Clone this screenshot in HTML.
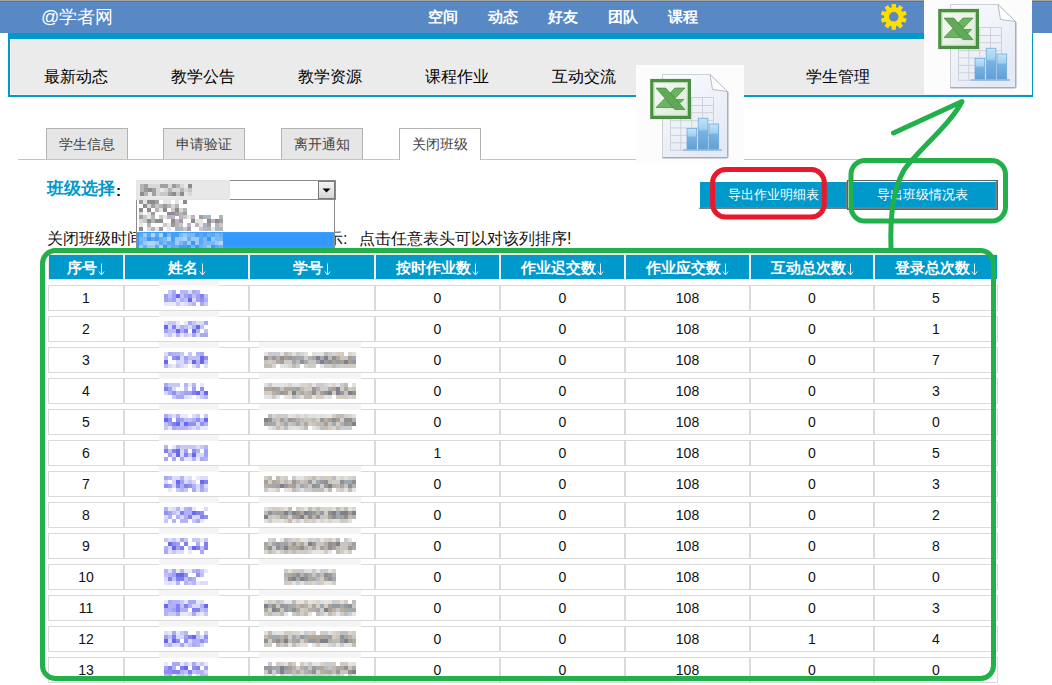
<!DOCTYPE html>
<html><head><meta charset="utf-8"><title>学生管理</title>
<style>
html,body{margin:0;padding:0;width:1052px;height:685px;overflow:hidden;background:#fff;font-family:'Liberation Sans',sans-serif;}
.a{position:absolute;white-space:nowrap}
</style></head><body>

<div class="a" style="left:0;top:0;width:1052px;height:1px;background:#a3a3a3"></div>
<div class="a" style="left:0;top:1px;width:1052px;height:1px;background:#707070"></div>
<div class="a" style="left:0;top:2px;width:1052px;height:31px;background:#5889c5"></div>
<div class="a" style="left:41px;top:6px;font-size:18px;line-height:22px;color:#fff">@学者网</div>
<div class="a" style="left:428px;top:7px;font-size:15px;line-height:20px;color:#fff;font-weight:bold">空间</div>
<div class="a" style="left:488px;top:7px;font-size:15px;line-height:20px;color:#fff;font-weight:bold">动态</div>
<div class="a" style="left:548px;top:7px;font-size:15px;line-height:20px;color:#fff;font-weight:bold">好友</div>
<div class="a" style="left:608px;top:7px;font-size:15px;line-height:20px;color:#fff;font-weight:bold">团队</div>
<div class="a" style="left:668px;top:7px;font-size:15px;line-height:20px;color:#fff;font-weight:bold">课程</div>
<svg style="position:absolute;left:0;top:0" width="1052" height="40"><path d="M891.66 7.13 L891.64 3.88 L895.96 3.88 L895.94 7.13 L896.74 7.76 L897.75 7.72 L899.65 5.08 L903.14 7.62 L901.21 10.24 L901.49 11.22 L902.33 11.78 L905.42 10.75 L906.76 14.86 L903.65 15.85 L903.30 16.80 L903.65 17.75 L906.76 18.74 L905.42 22.85 L902.33 21.82 L901.49 22.38 L901.21 23.36 L903.14 25.98 L899.65 28.52 L897.75 25.88 L896.74 25.84 L895.94 26.47 L895.96 29.72 L891.64 29.72 L891.66 26.47 L890.86 25.84 L889.85 25.88 L887.95 28.52 L884.46 25.98 L886.39 23.36 L886.11 22.38 L885.27 21.82 L882.18 22.85 L880.84 18.74 L883.95 17.75 L884.30 16.80 L883.95 15.85 L880.84 14.86 L882.18 10.75 L885.27 11.78 L886.11 11.22 L886.39 10.24 L884.46 7.62 L887.95 5.08 L889.85 7.72 L890.86 7.76 Z M898.60 16.8 A4.8 4.8 0 1 0 889.00 16.8 A4.8 4.8 0 1 0 898.60 16.8 Z" fill="#ffdd00" fill-rule="evenodd"/></svg>
<div class="a" style="left:8px;top:33px;width:1022px;height:56px;border-style:solid;border-color:#0099cc;border-width:6px 1px 2px 2px;background:#ebebeb"><div style="position:absolute;left:0;top:0;right:0;bottom:0;border-left:1px solid #fbf3f0;border-bottom:1px solid #fbf3f0"></div></div>
<div class="a" style="left:44px;top:67px;font-size:16px;line-height:20px;color:#000">最新动态</div>
<div class="a" style="left:171px;top:67px;font-size:16px;line-height:20px;color:#000">教学公告</div>
<div class="a" style="left:298px;top:67px;font-size:16px;line-height:20px;color:#000">教学资源</div>
<div class="a" style="left:425px;top:67px;font-size:16px;line-height:20px;color:#000">课程作业</div>
<div class="a" style="left:552px;top:67px;font-size:16px;line-height:20px;color:#000">互动交流</div>
<div class="a" style="left:806px;top:67px;font-size:16px;line-height:20px;color:#000">学生管理</div>
<div class="a" style="left:18px;top:159px;width:981px;height:1px;background:#c4c4c4"></div>
<div class="a" style="left:46px;top:128px;width:80px;height:30px;border:1px solid #b3b3b3;border-bottom:none;background:#e6e6e6;font-size:14px;line-height:30px;text-align:center;color:#444"><span style="position:relative;left:0px">学生信息</span></div>
<div class="a" style="left:163px;top:128px;width:80px;height:30px;border:1px solid #b3b3b3;border-bottom:none;background:#e6e6e6;font-size:14px;line-height:30px;text-align:center;color:#444"><span style="position:relative;left:0px">申请验证</span></div>
<div class="a" style="left:281px;top:128px;width:80px;height:30px;border:1px solid #b3b3b3;border-bottom:none;background:#e6e6e6;font-size:14px;line-height:30px;text-align:center;color:#444"><span style="position:relative;left:0px">离开通知</span></div>
<div class="a" style="left:399px;top:128px;width:80px;height:31px;border:1px solid #b3b3b3;border-bottom:none;background:#fff;font-size:14px;line-height:30px;text-align:center;color:#444"><span style="position:relative;left:0px">关闭班级</span></div>
<div class="a" style="left:47px;top:179px;font-size:17px;line-height:20px;color:#0099cc;font-weight:bold">班级选择<span style="color:#000;font-weight:bold;font-size:15px;margin-left:1px;position:relative;top:2px">:</span></div>
<div class="a" style="left:47px;top:229px;font-size:16px;line-height:20px;color:#111">关闭班级时间</div>
<div class="a" style="left:311px;top:229px;font-size:16px;line-height:20px;color:#111">提示<span style="display:inline-block;width:16px">:</span>点击任意表头可以对该列排序!</div>
<div class="a" style="left:136px;top:180px;width:198px;height:18px;border:1px solid #8a8a8a;background:#fff"></div>
<div class="a" style="left:136px;top:180px;width:94px;height:20px;background:#e4e4e4"></div>
<div class="a" style="left:137px;top:181px;width:92px;height:18px;background:#e8e8e8"></div>
<div class="a" style="left:318px;top:181px;width:15px;height:16px;border:1px solid #7a7a7a;background:linear-gradient(#f4f4f4,#d6d6d6)"></div>
<svg class="a" style="left:318px;top:181px" width="17" height="18"><path d="M4.5 7.5 H12.5 L8.5 11.5 Z" fill="#000"/></svg>
<div class="a" style="left:136px;top:200px;width:197px;height:47px;border:1px solid #8a8a8a;border-top:none;background:#fff"></div>
<div class="a" style="left:137px;top:232px;width:197px;height:15px;background:#3399ff;outline:1px dotted #d08040;outline-offset:-1px"></div>
<svg class="a" style="left:0;top:0" width="1052" height="250"><rect x="140" y="184" width="4" height="4" fill="#b5b5b5"/><rect x="144" y="184" width="4" height="4" fill="#a0a0a0"/><rect x="148" y="184" width="4" height="4" fill="#d8d8d8"/><rect x="152" y="184" width="4" height="4" fill="#d8d8d8"/><rect x="156" y="184" width="4" height="4" fill="#d8d8d8"/><rect x="160" y="184" width="4" height="4" fill="#a0a0a0"/><rect x="164" y="184" width="4" height="4" fill="#a0a0a0"/><rect x="168" y="184" width="4" height="4" fill="#d8d8d8"/><rect x="172" y="184" width="4" height="4" fill="#9a9a9a"/><rect x="176" y="184" width="4" height="4" fill="#b5b5b5"/><rect x="180" y="184" width="4" height="4" fill="#d8d8d8"/><rect x="188" y="184" width="4" height="4" fill="#8c8c8c"/><rect x="140" y="188" width="4" height="4" fill="#b5b5b5"/><rect x="144" y="188" width="4" height="4" fill="#9a9a9a"/><rect x="148" y="188" width="4" height="4" fill="#8c8c8c"/><rect x="152" y="188" width="4" height="4" fill="#a0a0a0"/><rect x="156" y="188" width="4" height="4" fill="#d8d8d8"/><rect x="164" y="188" width="4" height="4" fill="#d8d8d8"/><rect x="168" y="188" width="4" height="4" fill="#b5b5b5"/><rect x="172" y="188" width="4" height="4" fill="#d8d8d8"/><rect x="176" y="188" width="4" height="4" fill="#d8d8d8"/><rect x="180" y="188" width="4" height="4" fill="#b5b5b5"/><rect x="184" y="188" width="4" height="4" fill="#d8d8d8"/><rect x="188" y="188" width="4" height="4" fill="#c8c8c8"/><rect x="140" y="192" width="4" height="4" fill="#8c8c8c"/><rect x="144" y="192" width="4" height="4" fill="#b5b5b5"/><rect x="148" y="192" width="4" height="4" fill="#e6e6e6"/><rect x="152" y="192" width="4" height="4" fill="#a0a0a0"/><rect x="156" y="192" width="4" height="4" fill="#d8d8d8"/><rect x="160" y="192" width="4" height="4" fill="#c8c8c8"/><rect x="164" y="192" width="4" height="4" fill="#c8c8c8"/><rect x="168" y="192" width="4" height="4" fill="#a0a0a0"/><rect x="172" y="192" width="4" height="4" fill="#8c8c8c"/><rect x="176" y="192" width="4" height="4" fill="#c8c8c8"/><rect x="180" y="192" width="4" height="4" fill="#8c8c8c"/><rect x="184" y="192" width="4" height="4" fill="#e6e6e6"/><rect x="188" y="192" width="4" height="4" fill="#d8d8d8"/><rect x="139" y="200" width="4" height="4" fill="#9a9a9a"/><rect x="143" y="200" width="4" height="4" fill="#e6e6e6"/><rect x="147" y="200" width="4" height="4" fill="#8c8c8c"/><rect x="151" y="200" width="4" height="4" fill="#8c8c8c"/><rect x="155" y="200" width="4" height="4" fill="#a0a0a0"/><rect x="163" y="200" width="4" height="4" fill="#e6e6e6"/><rect x="167" y="200" width="4" height="4" fill="#e6e6e6"/><rect x="175" y="200" width="4" height="4" fill="#e6e6e6"/><rect x="183" y="200" width="4" height="4" fill="#8c8c8c"/><rect x="143" y="204" width="4" height="4" fill="#8c8c8c"/><rect x="147" y="204" width="4" height="4" fill="#d8d8d8"/><rect x="151" y="204" width="4" height="4" fill="#a0a0a0"/><rect x="155" y="204" width="4" height="4" fill="#c8c8c8"/><rect x="159" y="204" width="4" height="4" fill="#b5b5b5"/><rect x="163" y="204" width="4" height="4" fill="#9a9a9a"/><rect x="167" y="204" width="4" height="4" fill="#b5b5b5"/><rect x="171" y="204" width="4" height="4" fill="#d8d8d8"/><rect x="175" y="204" width="4" height="4" fill="#b5b5b5"/><rect x="139" y="208" width="4" height="4" fill="#8c8c8c"/><rect x="147" y="208" width="4" height="4" fill="#8c8c8c"/><rect x="155" y="208" width="4" height="4" fill="#b5b5b5"/><rect x="159" y="208" width="4" height="4" fill="#e6e6e6"/><rect x="163" y="208" width="4" height="4" fill="#8c8c8c"/><rect x="171" y="208" width="4" height="4" fill="#c8c8c8"/><rect x="175" y="208" width="4" height="4" fill="#8c8c8c"/><rect x="179" y="208" width="4" height="4" fill="#d8d8d8"/><rect x="183" y="208" width="4" height="4" fill="#b5b5b5"/><rect x="139" y="212" width="4" height="4" fill="#d8d8d8"/><rect x="147" y="212" width="4" height="4" fill="#e6e6e6"/><rect x="151" y="212" width="4" height="4" fill="#9a9a9a"/><rect x="167" y="212" width="4" height="4" fill="#8c8c8c"/><rect x="171" y="212" width="4" height="4" fill="#8c8c8c"/><rect x="175" y="212" width="4" height="4" fill="#a0a0a0"/><rect x="179" y="212" width="4" height="4" fill="#b5b5b5"/><rect x="183" y="212" width="4" height="4" fill="#a0a0a0"/><rect x="139" y="215" width="4" height="4" fill="#a0a0a0"/><rect x="143" y="215" width="4" height="4" fill="#c8c8c8"/><rect x="147" y="215" width="4" height="4" fill="#e6e6e6"/><rect x="151" y="215" width="4" height="4" fill="#b5b5b5"/><rect x="159" y="215" width="4" height="4" fill="#c8c8c8"/><rect x="163" y="215" width="4" height="4" fill="#e6e6e6"/><rect x="167" y="215" width="4" height="4" fill="#c0b0c8"/><rect x="171" y="215" width="4" height="4" fill="#c0b0c8"/><rect x="179" y="215" width="4" height="4" fill="#c0b0c8"/><rect x="183" y="215" width="4" height="4" fill="#c8c8c8"/><rect x="187" y="215" width="4" height="4" fill="#e6e6e6"/><rect x="191" y="215" width="4" height="4" fill="#c0b0c8"/><rect x="199" y="215" width="4" height="4" fill="#a0a0a0"/><rect x="203" y="215" width="4" height="4" fill="#a8b8c0"/><rect x="207" y="215" width="4" height="4" fill="#a8b8c0"/><rect x="219" y="215" width="4" height="4" fill="#b5b5b5"/><rect x="139" y="219" width="4" height="4" fill="#d8d8d8"/><rect x="143" y="219" width="4" height="4" fill="#c8c8c8"/><rect x="147" y="219" width="4" height="4" fill="#8c8c8c"/><rect x="151" y="219" width="4" height="4" fill="#a8b8c0"/><rect x="155" y="219" width="4" height="4" fill="#8c8c8c"/><rect x="159" y="219" width="4" height="4" fill="#8c8c8c"/><rect x="171" y="219" width="4" height="4" fill="#8c8c8c"/><rect x="175" y="219" width="4" height="4" fill="#c0b0c8"/><rect x="179" y="219" width="4" height="4" fill="#a0a0a0"/><rect x="191" y="219" width="4" height="4" fill="#8c8c8c"/><rect x="195" y="219" width="4" height="4" fill="#e6e6e6"/><rect x="199" y="219" width="4" height="4" fill="#e6e6e6"/><rect x="207" y="219" width="4" height="4" fill="#8c8c8c"/><rect x="211" y="219" width="4" height="4" fill="#c0b0c8"/><rect x="215" y="219" width="4" height="4" fill="#8c8c8c"/><rect x="219" y="219" width="4" height="4" fill="#a0a0a0"/><rect x="139" y="223" width="4" height="4" fill="#e6e6e6"/><rect x="147" y="223" width="4" height="4" fill="#b5b5b5"/><rect x="163" y="223" width="4" height="4" fill="#c8c8c8"/><rect x="167" y="223" width="4" height="4" fill="#e6e6e6"/><rect x="171" y="223" width="4" height="4" fill="#9a9a9a"/><rect x="175" y="223" width="4" height="4" fill="#b5b5b5"/><rect x="179" y="223" width="4" height="4" fill="#c8c8c8"/><rect x="187" y="223" width="4" height="4" fill="#c0b0c8"/><rect x="195" y="223" width="4" height="4" fill="#c0b0c8"/><rect x="199" y="223" width="4" height="4" fill="#e6e6e6"/><rect x="203" y="223" width="4" height="4" fill="#a8b8c0"/><rect x="207" y="223" width="4" height="4" fill="#a0a0a0"/><rect x="215" y="223" width="4" height="4" fill="#b5b5b5"/><rect x="219" y="223" width="4" height="4" fill="#c8c8c8"/><rect x="139" y="227" width="4" height="4" fill="#8c8c8c"/><rect x="147" y="227" width="4" height="4" fill="#d8d8d8"/><rect x="151" y="227" width="4" height="4" fill="#a8b8c0"/><rect x="155" y="227" width="4" height="4" fill="#e6e6e6"/><rect x="159" y="227" width="4" height="4" fill="#9a9a9a"/><rect x="167" y="227" width="4" height="4" fill="#e6e6e6"/><rect x="175" y="227" width="4" height="4" fill="#a8b8c0"/><rect x="179" y="227" width="4" height="4" fill="#a8b8c0"/><rect x="183" y="227" width="4" height="4" fill="#c8c8c8"/><rect x="187" y="227" width="4" height="4" fill="#a0a0a0"/><rect x="199" y="227" width="4" height="4" fill="#c8c8c8"/><rect x="203" y="227" width="4" height="4" fill="#c0b0c8"/><rect x="207" y="227" width="4" height="4" fill="#b5b5b5"/><rect x="211" y="227" width="4" height="4" fill="#e6e6e6"/><rect x="215" y="227" width="4" height="4" fill="#a8b8c0"/><rect x="219" y="227" width="4" height="4" fill="#b5b5b5"/><rect x="139" y="233" width="4" height="4" fill="#5aa8f6"/><rect x="143" y="233" width="4" height="4" fill="#9cc9f8"/><rect x="147" y="233" width="4" height="4" fill="#5aa8f6"/><rect x="151" y="233" width="4" height="4" fill="#b3d5f9"/><rect x="155" y="233" width="4" height="4" fill="#5aa8f6"/><rect x="159" y="233" width="4" height="4" fill="#b3d5f9"/><rect x="167" y="233" width="4" height="4" fill="#7ab8f8"/><rect x="171" y="233" width="4" height="4" fill="#4c9ef5"/><rect x="175" y="233" width="4" height="4" fill="#4c9ef5"/><rect x="179" y="233" width="4" height="4" fill="#7ab8f8"/><rect x="183" y="233" width="4" height="4" fill="#9cc9f8"/><rect x="187" y="233" width="4" height="4" fill="#7ab8f8"/><rect x="191" y="233" width="4" height="4" fill="#7ab8f8"/><rect x="195" y="233" width="4" height="4" fill="#4c9ef5"/><rect x="199" y="233" width="4" height="4" fill="#5aa8f6"/><rect x="203" y="233" width="4" height="4" fill="#4c9ef5"/><rect x="207" y="233" width="4" height="4" fill="#68b0f7"/><rect x="211" y="233" width="4" height="4" fill="#5aa8f6"/><rect x="215" y="233" width="4" height="4" fill="#7ab8f8"/><rect x="219" y="233" width="4" height="4" fill="#68b0f7"/><rect x="139" y="237" width="4" height="4" fill="#7ab8f8"/><rect x="143" y="237" width="4" height="4" fill="#7ab8f8"/><rect x="151" y="237" width="4" height="4" fill="#5aa8f6"/><rect x="155" y="237" width="4" height="4" fill="#4c9ef5"/><rect x="159" y="237" width="4" height="4" fill="#68b0f7"/><rect x="163" y="237" width="4" height="4" fill="#7ab8f8"/><rect x="167" y="237" width="4" height="4" fill="#b3d5f9"/><rect x="171" y="237" width="4" height="4" fill="#4c9ef5"/><rect x="175" y="237" width="4" height="4" fill="#9cc9f8"/><rect x="179" y="237" width="4" height="4" fill="#9cc9f8"/><rect x="183" y="237" width="4" height="4" fill="#b3d5f9"/><rect x="187" y="237" width="4" height="4" fill="#68b0f7"/><rect x="191" y="237" width="4" height="4" fill="#9cc9f8"/><rect x="195" y="237" width="4" height="4" fill="#9cc9f8"/><rect x="199" y="237" width="4" height="4" fill="#5aa8f6"/><rect x="203" y="237" width="4" height="4" fill="#7ab8f8"/><rect x="211" y="237" width="4" height="4" fill="#9cc9f8"/><rect x="215" y="237" width="4" height="4" fill="#7ab8f8"/><rect x="219" y="237" width="4" height="4" fill="#7ab8f8"/><rect x="139" y="241" width="4" height="4" fill="#68b0f7"/><rect x="143" y="241" width="4" height="4" fill="#9cc9f8"/><rect x="147" y="241" width="4" height="4" fill="#b3d5f9"/><rect x="151" y="241" width="4" height="4" fill="#b3d5f9"/><rect x="155" y="241" width="4" height="4" fill="#9cc9f8"/><rect x="159" y="241" width="4" height="4" fill="#5aa8f6"/><rect x="163" y="241" width="4" height="4" fill="#7ab8f8"/><rect x="167" y="241" width="4" height="4" fill="#5aa8f6"/><rect x="171" y="241" width="4" height="4" fill="#5aa8f6"/><rect x="175" y="241" width="4" height="4" fill="#9cc9f8"/><rect x="179" y="241" width="4" height="4" fill="#7ab8f8"/><rect x="183" y="241" width="4" height="4" fill="#5aa8f6"/><rect x="187" y="241" width="4" height="4" fill="#9cc9f8"/><rect x="195" y="241" width="4" height="4" fill="#9cc9f8"/><rect x="199" y="241" width="4" height="4" fill="#5aa8f6"/><rect x="203" y="241" width="4" height="4" fill="#7ab8f8"/><rect x="207" y="241" width="4" height="4" fill="#7ab8f8"/><rect x="211" y="241" width="4" height="4" fill="#7ab8f8"/><rect x="215" y="241" width="4" height="4" fill="#9cc9f8"/><rect x="219" y="241" width="4" height="4" fill="#b3d5f9"/><rect x="139" y="245" width="4" height="4" fill="#9cc9f8"/><rect x="143" y="245" width="4" height="4" fill="#68b0f7"/><rect x="147" y="245" width="4" height="4" fill="#9cc9f8"/><rect x="151" y="245" width="4" height="4" fill="#9cc9f8"/><rect x="155" y="245" width="4" height="4" fill="#5aa8f6"/><rect x="159" y="245" width="4" height="4" fill="#b3d5f9"/><rect x="167" y="245" width="4" height="4" fill="#7ab8f8"/><rect x="171" y="245" width="4" height="4" fill="#5aa8f6"/><rect x="175" y="245" width="4" height="4" fill="#68b0f7"/><rect x="179" y="245" width="4" height="4" fill="#4c9ef5"/><rect x="183" y="245" width="4" height="4" fill="#4c9ef5"/><rect x="191" y="245" width="4" height="4" fill="#7ab8f8"/><rect x="199" y="245" width="4" height="4" fill="#68b0f7"/><rect x="203" y="245" width="4" height="4" fill="#7ab8f8"/><rect x="207" y="245" width="4" height="4" fill="#9cc9f8"/><rect x="215" y="245" width="4" height="4" fill="#5aa8f6"/><rect x="219" y="245" width="4" height="4" fill="#68b0f7"/></svg>
<div class="a" style="left:699px;top:181px;width:146px;height:25px;border-style:solid;border-width:1px 2px 2px 1px;border-color:#fff #7d7d7d #7d7d7d #fff;background:#0099cc;color:#fff;font-size:13px;line-height:25px;text-align:center">导出作业明细表</div>
<div class="a" style="left:847px;top:180px;width:149px;height:28px;border:1px solid #5f5f5f;"><div style="position:absolute;left:0;top:0;width:146px;height:25px;border-style:solid;border-width:1px 2px 2px 1px;border-color:#fff #7d7d7d #7d7d7d #fff;background:#0099cc;color:#fff;font-size:13px;line-height:25px;text-align:center">导出班级情况表</div></div>
<div class="a" style="left:48px;top:254px;width:74px;height:24px;border:1px solid #f3ebe7;background:#0099cc;color:#fff;font-size:15px;line-height:26px;text-align:center"><b>序号</b><svg width="7" height="13" style="vertical-align:-3px;margin-left:1px"><path d="M3.5 0.5 V11.5 M0.8 8.5 L3.5 12 L6.2 8.5" stroke="#dff0f8" stroke-width="1" fill="none"/></svg></div>
<div class="a" style="left:124px;top:254px;width:123px;height:24px;border:1px solid #f3ebe7;background:#0099cc;color:#fff;font-size:15px;line-height:26px;text-align:center"><b>姓名</b><svg width="7" height="13" style="vertical-align:-3px;margin-left:1px"><path d="M3.5 0.5 V11.5 M0.8 8.5 L3.5 12 L6.2 8.5" stroke="#dff0f8" stroke-width="1" fill="none"/></svg></div>
<div class="a" style="left:249px;top:254px;width:124px;height:24px;border:1px solid #f3ebe7;background:#0099cc;color:#fff;font-size:15px;line-height:26px;text-align:center"><b>学号</b><svg width="7" height="13" style="vertical-align:-3px;margin-left:1px"><path d="M3.5 0.5 V11.5 M0.8 8.5 L3.5 12 L6.2 8.5" stroke="#dff0f8" stroke-width="1" fill="none"/></svg></div>
<div class="a" style="left:375px;top:254px;width:123px;height:24px;border:1px solid #f3ebe7;background:#0099cc;color:#fff;font-size:15px;line-height:26px;text-align:center"><b>按时作业数</b><svg width="7" height="13" style="vertical-align:-3px;margin-left:1px"><path d="M3.5 0.5 V11.5 M0.8 8.5 L3.5 12 L6.2 8.5" stroke="#dff0f8" stroke-width="1" fill="none"/></svg></div>
<div class="a" style="left:500px;top:254px;width:123px;height:24px;border:1px solid #f3ebe7;background:#0099cc;color:#fff;font-size:15px;line-height:26px;text-align:center"><b>作业迟交数</b><svg width="7" height="13" style="vertical-align:-3px;margin-left:1px"><path d="M3.5 0.5 V11.5 M0.8 8.5 L3.5 12 L6.2 8.5" stroke="#dff0f8" stroke-width="1" fill="none"/></svg></div>
<div class="a" style="left:625px;top:254px;width:123px;height:24px;border:1px solid #f3ebe7;background:#0099cc;color:#fff;font-size:15px;line-height:26px;text-align:center"><b>作业应交数</b><svg width="7" height="13" style="vertical-align:-3px;margin-left:1px"><path d="M3.5 0.5 V11.5 M0.8 8.5 L3.5 12 L6.2 8.5" stroke="#dff0f8" stroke-width="1" fill="none"/></svg></div>
<div class="a" style="left:750px;top:254px;width:122px;height:24px;border:1px solid #f3ebe7;background:#0099cc;color:#fff;font-size:15px;line-height:26px;text-align:center"><b>互动总次数</b><svg width="7" height="13" style="vertical-align:-3px;margin-left:1px"><path d="M3.5 0.5 V11.5 M0.8 8.5 L3.5 12 L6.2 8.5" stroke="#dff0f8" stroke-width="1" fill="none"/></svg></div>
<div class="a" style="left:874px;top:254px;width:122px;height:24px;border:1px solid #f3ebe7;background:#0099cc;color:#fff;font-size:15px;line-height:26px;text-align:center"><b>登录总次数</b><svg width="7" height="13" style="vertical-align:-3px;margin-left:1px"><path d="M3.5 0.5 V11.5 M0.8 8.5 L3.5 12 L6.2 8.5" stroke="#dff0f8" stroke-width="1" fill="none"/></svg></div>
<div class="a" style="left:48px;top:285px;width:74px;height:24px;border:1px solid #dadada;background:#fff;color:#111;font-size:14px;line-height:25px;text-align:center">1</div>
<div class="a" style="left:124px;top:285px;width:123px;height:24px;border:1px solid #dadada;background:#fff;color:#111;font-size:14px;line-height:25px;text-align:center"></div>
<div class="a" style="left:249px;top:285px;width:124px;height:24px;border:1px solid #dadada;background:#fff;color:#111;font-size:14px;line-height:25px;text-align:center"></div>
<div class="a" style="left:375px;top:285px;width:123px;height:24px;border:1px solid #dadada;background:#fff;color:#111;font-size:14px;line-height:25px;text-align:center">0</div>
<div class="a" style="left:500px;top:285px;width:123px;height:24px;border:1px solid #dadada;background:#fff;color:#111;font-size:14px;line-height:25px;text-align:center">0</div>
<div class="a" style="left:625px;top:285px;width:123px;height:24px;border:1px solid #dadada;background:#fff;color:#111;font-size:14px;line-height:25px;text-align:center">108</div>
<div class="a" style="left:750px;top:285px;width:122px;height:24px;border:1px solid #dadada;background:#fff;color:#111;font-size:14px;line-height:25px;text-align:center">0</div>
<div class="a" style="left:874px;top:285px;width:122px;height:24px;border:1px solid #dadada;background:#fff;color:#111;font-size:14px;line-height:25px;text-align:center">5</div>
<div class="a" style="left:48px;top:316px;width:74px;height:24px;border:1px solid #dadada;background:#fff;color:#111;font-size:14px;line-height:25px;text-align:center">2</div>
<div class="a" style="left:124px;top:316px;width:123px;height:24px;border:1px solid #dadada;background:#fff;color:#111;font-size:14px;line-height:25px;text-align:center"></div>
<div class="a" style="left:249px;top:316px;width:124px;height:24px;border:1px solid #dadada;background:#fff;color:#111;font-size:14px;line-height:25px;text-align:center"></div>
<div class="a" style="left:375px;top:316px;width:123px;height:24px;border:1px solid #dadada;background:#fff;color:#111;font-size:14px;line-height:25px;text-align:center">0</div>
<div class="a" style="left:500px;top:316px;width:123px;height:24px;border:1px solid #dadada;background:#fff;color:#111;font-size:14px;line-height:25px;text-align:center">0</div>
<div class="a" style="left:625px;top:316px;width:123px;height:24px;border:1px solid #dadada;background:#fff;color:#111;font-size:14px;line-height:25px;text-align:center">108</div>
<div class="a" style="left:750px;top:316px;width:122px;height:24px;border:1px solid #dadada;background:#fff;color:#111;font-size:14px;line-height:25px;text-align:center">0</div>
<div class="a" style="left:874px;top:316px;width:122px;height:24px;border:1px solid #dadada;background:#fff;color:#111;font-size:14px;line-height:25px;text-align:center">1</div>
<div class="a" style="left:48px;top:347px;width:74px;height:24px;border:1px solid #dadada;background:#fff;color:#111;font-size:14px;line-height:25px;text-align:center">3</div>
<div class="a" style="left:124px;top:347px;width:123px;height:24px;border:1px solid #dadada;background:#fff;color:#111;font-size:14px;line-height:25px;text-align:center"></div>
<div class="a" style="left:249px;top:347px;width:124px;height:24px;border:1px solid #dadada;background:#fff;color:#111;font-size:14px;line-height:25px;text-align:center"></div>
<div class="a" style="left:375px;top:347px;width:123px;height:24px;border:1px solid #dadada;background:#fff;color:#111;font-size:14px;line-height:25px;text-align:center">0</div>
<div class="a" style="left:500px;top:347px;width:123px;height:24px;border:1px solid #dadada;background:#fff;color:#111;font-size:14px;line-height:25px;text-align:center">0</div>
<div class="a" style="left:625px;top:347px;width:123px;height:24px;border:1px solid #dadada;background:#fff;color:#111;font-size:14px;line-height:25px;text-align:center">108</div>
<div class="a" style="left:750px;top:347px;width:122px;height:24px;border:1px solid #dadada;background:#fff;color:#111;font-size:14px;line-height:25px;text-align:center">0</div>
<div class="a" style="left:874px;top:347px;width:122px;height:24px;border:1px solid #dadada;background:#fff;color:#111;font-size:14px;line-height:25px;text-align:center">7</div>
<div class="a" style="left:48px;top:378px;width:74px;height:24px;border:1px solid #dadada;background:#fff;color:#111;font-size:14px;line-height:25px;text-align:center">4</div>
<div class="a" style="left:124px;top:378px;width:123px;height:24px;border:1px solid #dadada;background:#fff;color:#111;font-size:14px;line-height:25px;text-align:center"></div>
<div class="a" style="left:249px;top:378px;width:124px;height:24px;border:1px solid #dadada;background:#fff;color:#111;font-size:14px;line-height:25px;text-align:center"></div>
<div class="a" style="left:375px;top:378px;width:123px;height:24px;border:1px solid #dadada;background:#fff;color:#111;font-size:14px;line-height:25px;text-align:center">0</div>
<div class="a" style="left:500px;top:378px;width:123px;height:24px;border:1px solid #dadada;background:#fff;color:#111;font-size:14px;line-height:25px;text-align:center">0</div>
<div class="a" style="left:625px;top:378px;width:123px;height:24px;border:1px solid #dadada;background:#fff;color:#111;font-size:14px;line-height:25px;text-align:center">108</div>
<div class="a" style="left:750px;top:378px;width:122px;height:24px;border:1px solid #dadada;background:#fff;color:#111;font-size:14px;line-height:25px;text-align:center">0</div>
<div class="a" style="left:874px;top:378px;width:122px;height:24px;border:1px solid #dadada;background:#fff;color:#111;font-size:14px;line-height:25px;text-align:center">3</div>
<div class="a" style="left:48px;top:409px;width:74px;height:24px;border:1px solid #dadada;background:#fff;color:#111;font-size:14px;line-height:25px;text-align:center">5</div>
<div class="a" style="left:124px;top:409px;width:123px;height:24px;border:1px solid #dadada;background:#fff;color:#111;font-size:14px;line-height:25px;text-align:center"></div>
<div class="a" style="left:249px;top:409px;width:124px;height:24px;border:1px solid #dadada;background:#fff;color:#111;font-size:14px;line-height:25px;text-align:center"></div>
<div class="a" style="left:375px;top:409px;width:123px;height:24px;border:1px solid #dadada;background:#fff;color:#111;font-size:14px;line-height:25px;text-align:center">0</div>
<div class="a" style="left:500px;top:409px;width:123px;height:24px;border:1px solid #dadada;background:#fff;color:#111;font-size:14px;line-height:25px;text-align:center">0</div>
<div class="a" style="left:625px;top:409px;width:123px;height:24px;border:1px solid #dadada;background:#fff;color:#111;font-size:14px;line-height:25px;text-align:center">108</div>
<div class="a" style="left:750px;top:409px;width:122px;height:24px;border:1px solid #dadada;background:#fff;color:#111;font-size:14px;line-height:25px;text-align:center">0</div>
<div class="a" style="left:874px;top:409px;width:122px;height:24px;border:1px solid #dadada;background:#fff;color:#111;font-size:14px;line-height:25px;text-align:center">0</div>
<div class="a" style="left:48px;top:440px;width:74px;height:24px;border:1px solid #dadada;background:#fff;color:#111;font-size:14px;line-height:25px;text-align:center">6</div>
<div class="a" style="left:124px;top:440px;width:123px;height:24px;border:1px solid #dadada;background:#fff;color:#111;font-size:14px;line-height:25px;text-align:center"></div>
<div class="a" style="left:249px;top:440px;width:124px;height:24px;border:1px solid #dadada;background:#fff;color:#111;font-size:14px;line-height:25px;text-align:center"></div>
<div class="a" style="left:375px;top:440px;width:123px;height:24px;border:1px solid #dadada;background:#fff;color:#111;font-size:14px;line-height:25px;text-align:center">1</div>
<div class="a" style="left:500px;top:440px;width:123px;height:24px;border:1px solid #dadada;background:#fff;color:#111;font-size:14px;line-height:25px;text-align:center">0</div>
<div class="a" style="left:625px;top:440px;width:123px;height:24px;border:1px solid #dadada;background:#fff;color:#111;font-size:14px;line-height:25px;text-align:center">108</div>
<div class="a" style="left:750px;top:440px;width:122px;height:24px;border:1px solid #dadada;background:#fff;color:#111;font-size:14px;line-height:25px;text-align:center">0</div>
<div class="a" style="left:874px;top:440px;width:122px;height:24px;border:1px solid #dadada;background:#fff;color:#111;font-size:14px;line-height:25px;text-align:center">5</div>
<div class="a" style="left:48px;top:471px;width:74px;height:24px;border:1px solid #dadada;background:#fff;color:#111;font-size:14px;line-height:25px;text-align:center">7</div>
<div class="a" style="left:124px;top:471px;width:123px;height:24px;border:1px solid #dadada;background:#fff;color:#111;font-size:14px;line-height:25px;text-align:center"></div>
<div class="a" style="left:249px;top:471px;width:124px;height:24px;border:1px solid #dadada;background:#fff;color:#111;font-size:14px;line-height:25px;text-align:center"></div>
<div class="a" style="left:375px;top:471px;width:123px;height:24px;border:1px solid #dadada;background:#fff;color:#111;font-size:14px;line-height:25px;text-align:center">0</div>
<div class="a" style="left:500px;top:471px;width:123px;height:24px;border:1px solid #dadada;background:#fff;color:#111;font-size:14px;line-height:25px;text-align:center">0</div>
<div class="a" style="left:625px;top:471px;width:123px;height:24px;border:1px solid #dadada;background:#fff;color:#111;font-size:14px;line-height:25px;text-align:center">108</div>
<div class="a" style="left:750px;top:471px;width:122px;height:24px;border:1px solid #dadada;background:#fff;color:#111;font-size:14px;line-height:25px;text-align:center">0</div>
<div class="a" style="left:874px;top:471px;width:122px;height:24px;border:1px solid #dadada;background:#fff;color:#111;font-size:14px;line-height:25px;text-align:center">3</div>
<div class="a" style="left:48px;top:502px;width:74px;height:24px;border:1px solid #dadada;background:#fff;color:#111;font-size:14px;line-height:25px;text-align:center">8</div>
<div class="a" style="left:124px;top:502px;width:123px;height:24px;border:1px solid #dadada;background:#fff;color:#111;font-size:14px;line-height:25px;text-align:center"></div>
<div class="a" style="left:249px;top:502px;width:124px;height:24px;border:1px solid #dadada;background:#fff;color:#111;font-size:14px;line-height:25px;text-align:center"></div>
<div class="a" style="left:375px;top:502px;width:123px;height:24px;border:1px solid #dadada;background:#fff;color:#111;font-size:14px;line-height:25px;text-align:center">0</div>
<div class="a" style="left:500px;top:502px;width:123px;height:24px;border:1px solid #dadada;background:#fff;color:#111;font-size:14px;line-height:25px;text-align:center">0</div>
<div class="a" style="left:625px;top:502px;width:123px;height:24px;border:1px solid #dadada;background:#fff;color:#111;font-size:14px;line-height:25px;text-align:center">108</div>
<div class="a" style="left:750px;top:502px;width:122px;height:24px;border:1px solid #dadada;background:#fff;color:#111;font-size:14px;line-height:25px;text-align:center">0</div>
<div class="a" style="left:874px;top:502px;width:122px;height:24px;border:1px solid #dadada;background:#fff;color:#111;font-size:14px;line-height:25px;text-align:center">2</div>
<div class="a" style="left:48px;top:533px;width:74px;height:24px;border:1px solid #dadada;background:#fff;color:#111;font-size:14px;line-height:25px;text-align:center">9</div>
<div class="a" style="left:124px;top:533px;width:123px;height:24px;border:1px solid #dadada;background:#fff;color:#111;font-size:14px;line-height:25px;text-align:center"></div>
<div class="a" style="left:249px;top:533px;width:124px;height:24px;border:1px solid #dadada;background:#fff;color:#111;font-size:14px;line-height:25px;text-align:center"></div>
<div class="a" style="left:375px;top:533px;width:123px;height:24px;border:1px solid #dadada;background:#fff;color:#111;font-size:14px;line-height:25px;text-align:center">0</div>
<div class="a" style="left:500px;top:533px;width:123px;height:24px;border:1px solid #dadada;background:#fff;color:#111;font-size:14px;line-height:25px;text-align:center">0</div>
<div class="a" style="left:625px;top:533px;width:123px;height:24px;border:1px solid #dadada;background:#fff;color:#111;font-size:14px;line-height:25px;text-align:center">108</div>
<div class="a" style="left:750px;top:533px;width:122px;height:24px;border:1px solid #dadada;background:#fff;color:#111;font-size:14px;line-height:25px;text-align:center">0</div>
<div class="a" style="left:874px;top:533px;width:122px;height:24px;border:1px solid #dadada;background:#fff;color:#111;font-size:14px;line-height:25px;text-align:center">8</div>
<div class="a" style="left:48px;top:564px;width:74px;height:24px;border:1px solid #dadada;background:#fff;color:#111;font-size:14px;line-height:25px;text-align:center">10</div>
<div class="a" style="left:124px;top:564px;width:123px;height:24px;border:1px solid #dadada;background:#fff;color:#111;font-size:14px;line-height:25px;text-align:center"></div>
<div class="a" style="left:249px;top:564px;width:124px;height:24px;border:1px solid #dadada;background:#fff;color:#111;font-size:14px;line-height:25px;text-align:center"></div>
<div class="a" style="left:375px;top:564px;width:123px;height:24px;border:1px solid #dadada;background:#fff;color:#111;font-size:14px;line-height:25px;text-align:center">0</div>
<div class="a" style="left:500px;top:564px;width:123px;height:24px;border:1px solid #dadada;background:#fff;color:#111;font-size:14px;line-height:25px;text-align:center">0</div>
<div class="a" style="left:625px;top:564px;width:123px;height:24px;border:1px solid #dadada;background:#fff;color:#111;font-size:14px;line-height:25px;text-align:center">108</div>
<div class="a" style="left:750px;top:564px;width:122px;height:24px;border:1px solid #dadada;background:#fff;color:#111;font-size:14px;line-height:25px;text-align:center">0</div>
<div class="a" style="left:874px;top:564px;width:122px;height:24px;border:1px solid #dadada;background:#fff;color:#111;font-size:14px;line-height:25px;text-align:center">0</div>
<div class="a" style="left:48px;top:595px;width:74px;height:24px;border:1px solid #dadada;background:#fff;color:#111;font-size:14px;line-height:25px;text-align:center">11</div>
<div class="a" style="left:124px;top:595px;width:123px;height:24px;border:1px solid #dadada;background:#fff;color:#111;font-size:14px;line-height:25px;text-align:center"></div>
<div class="a" style="left:249px;top:595px;width:124px;height:24px;border:1px solid #dadada;background:#fff;color:#111;font-size:14px;line-height:25px;text-align:center"></div>
<div class="a" style="left:375px;top:595px;width:123px;height:24px;border:1px solid #dadada;background:#fff;color:#111;font-size:14px;line-height:25px;text-align:center">0</div>
<div class="a" style="left:500px;top:595px;width:123px;height:24px;border:1px solid #dadada;background:#fff;color:#111;font-size:14px;line-height:25px;text-align:center">0</div>
<div class="a" style="left:625px;top:595px;width:123px;height:24px;border:1px solid #dadada;background:#fff;color:#111;font-size:14px;line-height:25px;text-align:center">108</div>
<div class="a" style="left:750px;top:595px;width:122px;height:24px;border:1px solid #dadada;background:#fff;color:#111;font-size:14px;line-height:25px;text-align:center">0</div>
<div class="a" style="left:874px;top:595px;width:122px;height:24px;border:1px solid #dadada;background:#fff;color:#111;font-size:14px;line-height:25px;text-align:center">3</div>
<div class="a" style="left:48px;top:626px;width:74px;height:24px;border:1px solid #dadada;background:#fff;color:#111;font-size:14px;line-height:25px;text-align:center">12</div>
<div class="a" style="left:124px;top:626px;width:123px;height:24px;border:1px solid #dadada;background:#fff;color:#111;font-size:14px;line-height:25px;text-align:center"></div>
<div class="a" style="left:249px;top:626px;width:124px;height:24px;border:1px solid #dadada;background:#fff;color:#111;font-size:14px;line-height:25px;text-align:center"></div>
<div class="a" style="left:375px;top:626px;width:123px;height:24px;border:1px solid #dadada;background:#fff;color:#111;font-size:14px;line-height:25px;text-align:center">0</div>
<div class="a" style="left:500px;top:626px;width:123px;height:24px;border:1px solid #dadada;background:#fff;color:#111;font-size:14px;line-height:25px;text-align:center">0</div>
<div class="a" style="left:625px;top:626px;width:123px;height:24px;border:1px solid #dadada;background:#fff;color:#111;font-size:14px;line-height:25px;text-align:center">108</div>
<div class="a" style="left:750px;top:626px;width:122px;height:24px;border:1px solid #dadada;background:#fff;color:#111;font-size:14px;line-height:25px;text-align:center">1</div>
<div class="a" style="left:874px;top:626px;width:122px;height:24px;border:1px solid #dadada;background:#fff;color:#111;font-size:14px;line-height:25px;text-align:center">4</div>
<div class="a" style="left:48px;top:657px;width:74px;height:24px;border:1px solid #dadada;background:#fff;color:#111;font-size:14px;line-height:25px;text-align:center">13</div>
<div class="a" style="left:124px;top:657px;width:123px;height:24px;border:1px solid #dadada;background:#fff;color:#111;font-size:14px;line-height:25px;text-align:center"></div>
<div class="a" style="left:249px;top:657px;width:124px;height:24px;border:1px solid #dadada;background:#fff;color:#111;font-size:14px;line-height:25px;text-align:center"></div>
<div class="a" style="left:375px;top:657px;width:123px;height:24px;border:1px solid #dadada;background:#fff;color:#111;font-size:14px;line-height:25px;text-align:center">0</div>
<div class="a" style="left:500px;top:657px;width:123px;height:24px;border:1px solid #dadada;background:#fff;color:#111;font-size:14px;line-height:25px;text-align:center">0</div>
<div class="a" style="left:625px;top:657px;width:123px;height:24px;border:1px solid #dadada;background:#fff;color:#111;font-size:14px;line-height:25px;text-align:center">108</div>
<div class="a" style="left:750px;top:657px;width:122px;height:24px;border:1px solid #dadada;background:#fff;color:#111;font-size:14px;line-height:25px;text-align:center">0</div>
<div class="a" style="left:874px;top:657px;width:122px;height:24px;border:1px solid #dadada;background:#fff;color:#111;font-size:14px;line-height:25px;text-align:center">0</div>
<svg class="a" style="left:0;top:0" width="1052" height="685"><rect x="159" y="280" width="60" height="6" fill="#f5f5f5"/><rect x="168" y="290" width="4" height="4" fill="#c8c8f8"/><rect x="172" y="290" width="4" height="4" fill="#a8a8f4"/><rect x="180" y="290" width="4" height="4" fill="#b4b4f6"/><rect x="184" y="290" width="4" height="4" fill="#b4b4f6"/><rect x="188" y="290" width="4" height="4" fill="#dcdcfb"/><rect x="192" y="290" width="4" height="4" fill="#a8a8f4"/><rect x="196" y="290" width="4" height="4" fill="#b4b4f6"/><rect x="164" y="294" width="4" height="4" fill="#a0a0f4"/><rect x="168" y="294" width="4" height="4" fill="#c0c0f8"/><rect x="172" y="294" width="4" height="4" fill="#a0a0f4"/><rect x="176" y="294" width="4" height="4" fill="#6868ee"/><rect x="180" y="294" width="4" height="4" fill="#c0c0f8"/><rect x="184" y="294" width="4" height="4" fill="#a0a0f4"/><rect x="188" y="294" width="4" height="4" fill="#9090f2"/><rect x="192" y="294" width="4" height="4" fill="#c0c0f8"/><rect x="196" y="294" width="4" height="4" fill="#a0a0f4"/><rect x="200" y="294" width="4" height="4" fill="#8080f0"/><rect x="204" y="294" width="4" height="4" fill="#c0c0f8"/><rect x="164" y="298" width="4" height="4" fill="#a0a0f4"/><rect x="168" y="298" width="4" height="4" fill="#b0b0f6"/><rect x="172" y="298" width="4" height="4" fill="#a0a0f4"/><rect x="176" y="298" width="4" height="4" fill="#d8d8fa"/><rect x="180" y="298" width="4" height="4" fill="#b0b0f6"/><rect x="184" y="298" width="4" height="4" fill="#c0c0f8"/><rect x="188" y="298" width="4" height="4" fill="#6868ee"/><rect x="192" y="298" width="4" height="4" fill="#d8d8fa"/><rect x="196" y="298" width="4" height="4" fill="#a0a0f4"/><rect x="200" y="298" width="4" height="4" fill="#9090f2"/><rect x="204" y="298" width="4" height="4" fill="#b0b0f6"/><rect x="164" y="302" width="4" height="4" fill="#e8e8fd"/><rect x="168" y="302" width="4" height="4" fill="#e8e8fd"/><rect x="172" y="302" width="4" height="4" fill="#e8e8fd"/><rect x="176" y="302" width="4" height="4" fill="#c8c8f8"/><rect x="180" y="302" width="4" height="4" fill="#e8e8fd"/><rect x="184" y="302" width="4" height="4" fill="#dcdcfb"/><rect x="188" y="302" width="4" height="4" fill="#c8c8f8"/><rect x="192" y="302" width="4" height="4" fill="#b4b4f6"/><rect x="200" y="302" width="4" height="4" fill="#a8a8f4"/><rect x="204" y="302" width="4" height="4" fill="#c8c8f8"/><rect x="159" y="311" width="60" height="6" fill="#f5f5f5"/><rect x="164" y="321" width="4" height="4" fill="#dcdcfb"/><rect x="168" y="321" width="4" height="4" fill="#c8c8f8"/><rect x="172" y="321" width="4" height="4" fill="#c8c8f8"/><rect x="176" y="321" width="4" height="4" fill="#e8e8fd"/><rect x="184" y="321" width="4" height="4" fill="#e8e8fd"/><rect x="188" y="321" width="4" height="4" fill="#a8a8f4"/><rect x="192" y="321" width="4" height="4" fill="#c8c8f8"/><rect x="196" y="321" width="4" height="4" fill="#dcdcfb"/><rect x="200" y="321" width="4" height="4" fill="#dcdcfb"/><rect x="204" y="321" width="4" height="4" fill="#a8a8f4"/><rect x="164" y="325" width="4" height="4" fill="#6868ee"/><rect x="168" y="325" width="4" height="4" fill="#d8d8fa"/><rect x="172" y="325" width="4" height="4" fill="#8080f0"/><rect x="176" y="325" width="4" height="4" fill="#d8d8fa"/><rect x="180" y="325" width="4" height="4" fill="#b0b0f6"/><rect x="184" y="325" width="4" height="4" fill="#c0c0f8"/><rect x="188" y="325" width="4" height="4" fill="#d8d8fa"/><rect x="192" y="325" width="4" height="4" fill="#b0b0f6"/><rect x="196" y="325" width="4" height="4" fill="#6868ee"/><rect x="200" y="325" width="4" height="4" fill="#c0c0f8"/><rect x="164" y="329" width="4" height="4" fill="#a0a0f4"/><rect x="168" y="329" width="4" height="4" fill="#c0c0f8"/><rect x="172" y="329" width="4" height="4" fill="#c0c0f8"/><rect x="176" y="329" width="4" height="4" fill="#6868ee"/><rect x="180" y="329" width="4" height="4" fill="#b0b0f6"/><rect x="184" y="329" width="4" height="4" fill="#8080f0"/><rect x="192" y="329" width="4" height="4" fill="#6868ee"/><rect x="196" y="329" width="4" height="4" fill="#b0b0f6"/><rect x="204" y="329" width="4" height="4" fill="#c0c0f8"/><rect x="164" y="333" width="4" height="4" fill="#dcdcfb"/><rect x="168" y="333" width="4" height="4" fill="#c8c8f8"/><rect x="172" y="333" width="4" height="4" fill="#e8e8fd"/><rect x="176" y="333" width="4" height="4" fill="#b4b4f6"/><rect x="180" y="333" width="4" height="4" fill="#e8e8fd"/><rect x="184" y="333" width="4" height="4" fill="#c8c8f8"/><rect x="188" y="333" width="4" height="4" fill="#dcdcfb"/><rect x="192" y="333" width="4" height="4" fill="#a8a8f4"/><rect x="196" y="333" width="4" height="4" fill="#dcdcfb"/><rect x="200" y="333" width="4" height="4" fill="#a8a8f4"/><rect x="204" y="333" width="4" height="4" fill="#a8a8f4"/><rect x="159" y="342" width="60" height="6" fill="#f5f5f5"/><rect x="164" y="352" width="4" height="4" fill="#dcdcfb"/><rect x="168" y="352" width="4" height="4" fill="#a8a8f4"/><rect x="172" y="352" width="4" height="4" fill="#b4b4f6"/><rect x="176" y="352" width="4" height="4" fill="#b4b4f6"/><rect x="180" y="352" width="4" height="4" fill="#c8c8f8"/><rect x="188" y="352" width="4" height="4" fill="#c8c8f8"/><rect x="196" y="352" width="4" height="4" fill="#b4b4f6"/><rect x="200" y="352" width="4" height="4" fill="#a8a8f4"/><rect x="164" y="356" width="4" height="4" fill="#c0c0f8"/><rect x="172" y="356" width="4" height="4" fill="#9090f2"/><rect x="176" y="356" width="4" height="4" fill="#8080f0"/><rect x="180" y="356" width="4" height="4" fill="#d8d8fa"/><rect x="184" y="356" width="4" height="4" fill="#a0a0f4"/><rect x="188" y="356" width="4" height="4" fill="#c0c0f8"/><rect x="192" y="356" width="4" height="4" fill="#c0c0f8"/><rect x="196" y="356" width="4" height="4" fill="#c0c0f8"/><rect x="200" y="356" width="4" height="4" fill="#6868ee"/><rect x="204" y="356" width="4" height="4" fill="#9090f2"/><rect x="164" y="360" width="4" height="4" fill="#6868ee"/><rect x="176" y="360" width="4" height="4" fill="#d8d8fa"/><rect x="180" y="360" width="4" height="4" fill="#d8d8fa"/><rect x="184" y="360" width="4" height="4" fill="#b0b0f6"/><rect x="188" y="360" width="4" height="4" fill="#d8d8fa"/><rect x="192" y="360" width="4" height="4" fill="#6868ee"/><rect x="196" y="360" width="4" height="4" fill="#b0b0f6"/><rect x="200" y="360" width="4" height="4" fill="#6868ee"/><rect x="204" y="360" width="4" height="4" fill="#c0c0f8"/><rect x="164" y="364" width="4" height="4" fill="#b4b4f6"/><rect x="168" y="364" width="4" height="4" fill="#dcdcfb"/><rect x="172" y="364" width="4" height="4" fill="#e8e8fd"/><rect x="176" y="364" width="4" height="4" fill="#c8c8f8"/><rect x="180" y="364" width="4" height="4" fill="#dcdcfb"/><rect x="184" y="364" width="4" height="4" fill="#e8e8fd"/><rect x="192" y="364" width="4" height="4" fill="#dcdcfb"/><rect x="196" y="364" width="4" height="4" fill="#b4b4f6"/><rect x="204" y="364" width="4" height="4" fill="#dcdcfb"/><rect x="259" y="342" width="102" height="6" fill="#f5f5f5"/><rect x="264" y="352" width="4" height="4" fill="#e6e4e2"/><rect x="268" y="352" width="4" height="4" fill="#c8ccd2"/><rect x="272" y="352" width="4" height="4" fill="#c8ccd2"/><rect x="276" y="352" width="4" height="4" fill="#c8ccd2"/><rect x="280" y="352" width="4" height="4" fill="#e6e4e2"/><rect x="284" y="352" width="4" height="4" fill="#c0bcb8"/><rect x="288" y="352" width="4" height="4" fill="#d4ccc0"/><rect x="292" y="352" width="4" height="4" fill="#e0e0dc"/><rect x="296" y="352" width="4" height="4" fill="#c8ccd2"/><rect x="300" y="352" width="4" height="4" fill="#d8d4d0"/><rect x="304" y="352" width="4" height="4" fill="#e0e0dc"/><rect x="312" y="352" width="4" height="4" fill="#e0e0dc"/><rect x="316" y="352" width="4" height="4" fill="#e6e4e2"/><rect x="320" y="352" width="4" height="4" fill="#e6e4e2"/><rect x="324" y="352" width="4" height="4" fill="#c0bcb8"/><rect x="328" y="352" width="4" height="4" fill="#c8ccd2"/><rect x="332" y="352" width="4" height="4" fill="#d8d4d0"/><rect x="336" y="352" width="4" height="4" fill="#d4ccc0"/><rect x="340" y="352" width="4" height="4" fill="#d4ccc0"/><rect x="348" y="352" width="4" height="4" fill="#d8d4d0"/><rect x="352" y="352" width="4" height="4" fill="#e0e0dc"/><rect x="264" y="356" width="4" height="4" fill="#909090"/><rect x="268" y="356" width="4" height="4" fill="#b8b0a8"/><rect x="272" y="356" width="4" height="4" fill="#9898a0"/><rect x="276" y="356" width="4" height="4" fill="#b8b0a8"/><rect x="280" y="356" width="4" height="4" fill="#909090"/><rect x="284" y="356" width="4" height="4" fill="#a8a098"/><rect x="288" y="356" width="4" height="4" fill="#9898a0"/><rect x="292" y="356" width="4" height="4" fill="#a8a098"/><rect x="296" y="356" width="4" height="4" fill="#a0a8b0"/><rect x="300" y="356" width="4" height="4" fill="#a0a8b0"/><rect x="304" y="356" width="4" height="4" fill="#d0ccc8"/><rect x="308" y="356" width="4" height="4" fill="#b8b0a8"/><rect x="312" y="356" width="4" height="4" fill="#a0a8b0"/><rect x="316" y="356" width="4" height="4" fill="#808088"/><rect x="320" y="356" width="4" height="4" fill="#a0a8b0"/><rect x="324" y="356" width="4" height="4" fill="#808088"/><rect x="328" y="356" width="4" height="4" fill="#bfbab4"/><rect x="332" y="356" width="4" height="4" fill="#909090"/><rect x="336" y="356" width="4" height="4" fill="#b0a898"/><rect x="340" y="356" width="4" height="4" fill="#c8c4c0"/><rect x="344" y="356" width="4" height="4" fill="#c8c4c0"/><rect x="348" y="356" width="4" height="4" fill="#a8a098"/><rect x="352" y="356" width="4" height="4" fill="#a0a8b0"/><rect x="264" y="360" width="4" height="4" fill="#c8c4c0"/><rect x="268" y="360" width="4" height="4" fill="#d0ccc8"/><rect x="272" y="360" width="4" height="4" fill="#c8c4c0"/><rect x="276" y="360" width="4" height="4" fill="#b0a898"/><rect x="280" y="360" width="4" height="4" fill="#a8a098"/><rect x="284" y="360" width="4" height="4" fill="#d0ccc8"/><rect x="288" y="360" width="4" height="4" fill="#d0ccc8"/><rect x="292" y="360" width="4" height="4" fill="#a0a8b0"/><rect x="296" y="360" width="4" height="4" fill="#bfbab4"/><rect x="300" y="360" width="4" height="4" fill="#909090"/><rect x="304" y="360" width="4" height="4" fill="#a0a8b0"/><rect x="308" y="360" width="4" height="4" fill="#c8c4c0"/><rect x="312" y="360" width="4" height="4" fill="#c8c4c0"/><rect x="316" y="360" width="4" height="4" fill="#a0a8b0"/><rect x="320" y="360" width="4" height="4" fill="#808088"/><rect x="324" y="360" width="4" height="4" fill="#9898a0"/><rect x="328" y="360" width="4" height="4" fill="#909090"/><rect x="332" y="360" width="4" height="4" fill="#a8a098"/><rect x="336" y="360" width="4" height="4" fill="#9898a0"/><rect x="340" y="360" width="4" height="4" fill="#a8a098"/><rect x="344" y="360" width="4" height="4" fill="#808088"/><rect x="348" y="360" width="4" height="4" fill="#a8a098"/><rect x="352" y="360" width="4" height="4" fill="#9898a0"/><rect x="264" y="364" width="4" height="4" fill="#c0bcb8"/><rect x="268" y="364" width="4" height="4" fill="#c0bcb8"/><rect x="272" y="364" width="4" height="4" fill="#d8d4d0"/><rect x="280" y="364" width="4" height="4" fill="#e6e4e2"/><rect x="284" y="364" width="4" height="4" fill="#e0e0dc"/><rect x="288" y="364" width="4" height="4" fill="#d8d4d0"/><rect x="292" y="364" width="4" height="4" fill="#c0bcb8"/><rect x="296" y="364" width="4" height="4" fill="#c8ccd2"/><rect x="304" y="364" width="4" height="4" fill="#d8d4d0"/><rect x="308" y="364" width="4" height="4" fill="#c8ccd2"/><rect x="312" y="364" width="4" height="4" fill="#d4ccc0"/><rect x="320" y="364" width="4" height="4" fill="#e6e4e2"/><rect x="324" y="364" width="4" height="4" fill="#c8ccd2"/><rect x="328" y="364" width="4" height="4" fill="#d4ccc0"/><rect x="332" y="364" width="4" height="4" fill="#c0bcb8"/><rect x="336" y="364" width="4" height="4" fill="#c8ccd2"/><rect x="340" y="364" width="4" height="4" fill="#d4ccc0"/><rect x="344" y="364" width="4" height="4" fill="#c8ccd2"/><rect x="348" y="364" width="4" height="4" fill="#d4ccc0"/><rect x="352" y="364" width="4" height="4" fill="#d4ccc0"/><rect x="159" y="373" width="60" height="6" fill="#f5f5f5"/><rect x="164" y="383" width="4" height="4" fill="#a8a8f4"/><rect x="168" y="383" width="4" height="4" fill="#c8c8f8"/><rect x="172" y="383" width="4" height="4" fill="#c8c8f8"/><rect x="176" y="383" width="4" height="4" fill="#c8c8f8"/><rect x="184" y="383" width="4" height="4" fill="#b4b4f6"/><rect x="188" y="383" width="4" height="4" fill="#e8e8fd"/><rect x="192" y="383" width="4" height="4" fill="#b4b4f6"/><rect x="200" y="383" width="4" height="4" fill="#e8e8fd"/><rect x="164" y="387" width="4" height="4" fill="#8080f0"/><rect x="168" y="387" width="4" height="4" fill="#a0a0f4"/><rect x="172" y="387" width="4" height="4" fill="#d8d8fa"/><rect x="184" y="387" width="4" height="4" fill="#c0c0f8"/><rect x="192" y="387" width="4" height="4" fill="#a0a0f4"/><rect x="200" y="387" width="4" height="4" fill="#9090f2"/><rect x="164" y="391" width="4" height="4" fill="#d8d8fa"/><rect x="168" y="391" width="4" height="4" fill="#b0b0f6"/><rect x="172" y="391" width="4" height="4" fill="#9090f2"/><rect x="176" y="391" width="4" height="4" fill="#c0c0f8"/><rect x="180" y="391" width="4" height="4" fill="#b0b0f6"/><rect x="184" y="391" width="4" height="4" fill="#a0a0f4"/><rect x="188" y="391" width="4" height="4" fill="#a0a0f4"/><rect x="192" y="391" width="4" height="4" fill="#8080f0"/><rect x="196" y="391" width="4" height="4" fill="#6868ee"/><rect x="200" y="391" width="4" height="4" fill="#c0c0f8"/><rect x="204" y="391" width="4" height="4" fill="#6868ee"/><rect x="172" y="395" width="4" height="4" fill="#c8c8f8"/><rect x="176" y="395" width="4" height="4" fill="#a8a8f4"/><rect x="180" y="395" width="4" height="4" fill="#a8a8f4"/><rect x="184" y="395" width="4" height="4" fill="#dcdcfb"/><rect x="188" y="395" width="4" height="4" fill="#e8e8fd"/><rect x="196" y="395" width="4" height="4" fill="#e8e8fd"/><rect x="200" y="395" width="4" height="4" fill="#c8c8f8"/><rect x="204" y="395" width="4" height="4" fill="#b4b4f6"/><rect x="259" y="373" width="102" height="6" fill="#f5f5f5"/><rect x="264" y="383" width="4" height="4" fill="#e0e0dc"/><rect x="268" y="383" width="4" height="4" fill="#c8ccd2"/><rect x="272" y="383" width="4" height="4" fill="#e6e4e2"/><rect x="276" y="383" width="4" height="4" fill="#e6e4e2"/><rect x="280" y="383" width="4" height="4" fill="#e6e4e2"/><rect x="284" y="383" width="4" height="4" fill="#e0e0dc"/><rect x="288" y="383" width="4" height="4" fill="#d8d4d0"/><rect x="292" y="383" width="4" height="4" fill="#e6e4e2"/><rect x="296" y="383" width="4" height="4" fill="#e6e4e2"/><rect x="300" y="383" width="4" height="4" fill="#d8d4d0"/><rect x="304" y="383" width="4" height="4" fill="#d8d4d0"/><rect x="308" y="383" width="4" height="4" fill="#d4ccc0"/><rect x="312" y="383" width="4" height="4" fill="#e6e4e2"/><rect x="316" y="383" width="4" height="4" fill="#c8ccd2"/><rect x="320" y="383" width="4" height="4" fill="#c8ccd2"/><rect x="324" y="383" width="4" height="4" fill="#d8d4d0"/><rect x="328" y="383" width="4" height="4" fill="#e0e0dc"/><rect x="332" y="383" width="4" height="4" fill="#d8d4d0"/><rect x="336" y="383" width="4" height="4" fill="#e6e4e2"/><rect x="340" y="383" width="4" height="4" fill="#c8ccd2"/><rect x="344" y="383" width="4" height="4" fill="#c0bcb8"/><rect x="352" y="383" width="4" height="4" fill="#e0e0dc"/><rect x="264" y="387" width="4" height="4" fill="#b0a898"/><rect x="268" y="387" width="4" height="4" fill="#b0a898"/><rect x="272" y="387" width="4" height="4" fill="#a8a098"/><rect x="276" y="387" width="4" height="4" fill="#a0a8b0"/><rect x="280" y="387" width="4" height="4" fill="#c8c4c0"/><rect x="284" y="387" width="4" height="4" fill="#b0a898"/><rect x="288" y="387" width="4" height="4" fill="#b0a898"/><rect x="292" y="387" width="4" height="4" fill="#a0a8b0"/><rect x="296" y="387" width="4" height="4" fill="#a8a098"/><rect x="300" y="387" width="4" height="4" fill="#bfbab4"/><rect x="304" y="387" width="4" height="4" fill="#d0ccc8"/><rect x="308" y="387" width="4" height="4" fill="#d0ccc8"/><rect x="312" y="387" width="4" height="4" fill="#9898a0"/><rect x="316" y="387" width="4" height="4" fill="#b8b0a8"/><rect x="320" y="387" width="4" height="4" fill="#d0ccc8"/><rect x="324" y="387" width="4" height="4" fill="#d0ccc8"/><rect x="328" y="387" width="4" height="4" fill="#a0a8b0"/><rect x="332" y="387" width="4" height="4" fill="#a8a098"/><rect x="336" y="387" width="4" height="4" fill="#808088"/><rect x="340" y="387" width="4" height="4" fill="#d0ccc8"/><rect x="344" y="387" width="4" height="4" fill="#b0a898"/><rect x="348" y="387" width="4" height="4" fill="#d0ccc8"/><rect x="352" y="387" width="4" height="4" fill="#c8c4c0"/><rect x="264" y="391" width="4" height="4" fill="#d0ccc8"/><rect x="268" y="391" width="4" height="4" fill="#d0ccc8"/><rect x="272" y="391" width="4" height="4" fill="#b8b0a8"/><rect x="276" y="391" width="4" height="4" fill="#b0a898"/><rect x="280" y="391" width="4" height="4" fill="#9898a0"/><rect x="284" y="391" width="4" height="4" fill="#a8a098"/><rect x="288" y="391" width="4" height="4" fill="#d0ccc8"/><rect x="292" y="391" width="4" height="4" fill="#808088"/><rect x="296" y="391" width="4" height="4" fill="#bfbab4"/><rect x="300" y="391" width="4" height="4" fill="#b0a898"/><rect x="304" y="391" width="4" height="4" fill="#bfbab4"/><rect x="308" y="391" width="4" height="4" fill="#b8b0a8"/><rect x="312" y="391" width="4" height="4" fill="#909090"/><rect x="316" y="391" width="4" height="4" fill="#c8c4c0"/><rect x="320" y="391" width="4" height="4" fill="#a8a098"/><rect x="324" y="391" width="4" height="4" fill="#909090"/><rect x="328" y="391" width="4" height="4" fill="#808088"/><rect x="332" y="391" width="4" height="4" fill="#d0ccc8"/><rect x="336" y="391" width="4" height="4" fill="#808088"/><rect x="340" y="391" width="4" height="4" fill="#9898a0"/><rect x="344" y="391" width="4" height="4" fill="#c8c4c0"/><rect x="348" y="391" width="4" height="4" fill="#808088"/><rect x="352" y="391" width="4" height="4" fill="#909090"/><rect x="264" y="395" width="4" height="4" fill="#e6e4e2"/><rect x="268" y="395" width="4" height="4" fill="#e0e0dc"/><rect x="272" y="395" width="4" height="4" fill="#c8ccd2"/><rect x="276" y="395" width="4" height="4" fill="#e6e4e2"/><rect x="284" y="395" width="4" height="4" fill="#e6e4e2"/><rect x="288" y="395" width="4" height="4" fill="#e0e0dc"/><rect x="292" y="395" width="4" height="4" fill="#c0bcb8"/><rect x="296" y="395" width="4" height="4" fill="#c8ccd2"/><rect x="300" y="395" width="4" height="4" fill="#e0e0dc"/><rect x="304" y="395" width="4" height="4" fill="#c0bcb8"/><rect x="308" y="395" width="4" height="4" fill="#c0bcb8"/><rect x="312" y="395" width="4" height="4" fill="#e0e0dc"/><rect x="316" y="395" width="4" height="4" fill="#d4ccc0"/><rect x="320" y="395" width="4" height="4" fill="#d4ccc0"/><rect x="324" y="395" width="4" height="4" fill="#e6e4e2"/><rect x="328" y="395" width="4" height="4" fill="#e0e0dc"/><rect x="336" y="395" width="4" height="4" fill="#d4ccc0"/><rect x="340" y="395" width="4" height="4" fill="#d4ccc0"/><rect x="344" y="395" width="4" height="4" fill="#d4ccc0"/><rect x="348" y="395" width="4" height="4" fill="#d8d4d0"/><rect x="352" y="395" width="4" height="4" fill="#d4ccc0"/><rect x="159" y="404" width="60" height="6" fill="#f5f5f5"/><rect x="164" y="414" width="4" height="4" fill="#a8a8f4"/><rect x="168" y="414" width="4" height="4" fill="#c8c8f8"/><rect x="172" y="414" width="4" height="4" fill="#dcdcfb"/><rect x="176" y="414" width="4" height="4" fill="#b4b4f6"/><rect x="180" y="414" width="4" height="4" fill="#e8e8fd"/><rect x="184" y="414" width="4" height="4" fill="#e8e8fd"/><rect x="192" y="414" width="4" height="4" fill="#dcdcfb"/><rect x="196" y="414" width="4" height="4" fill="#c8c8f8"/><rect x="204" y="414" width="4" height="4" fill="#c8c8f8"/><rect x="164" y="418" width="4" height="4" fill="#6868ee"/><rect x="168" y="418" width="4" height="4" fill="#9090f2"/><rect x="176" y="418" width="4" height="4" fill="#9090f2"/><rect x="180" y="418" width="4" height="4" fill="#a0a0f4"/><rect x="184" y="418" width="4" height="4" fill="#c0c0f8"/><rect x="188" y="418" width="4" height="4" fill="#c0c0f8"/><rect x="192" y="418" width="4" height="4" fill="#b0b0f6"/><rect x="196" y="418" width="4" height="4" fill="#9090f2"/><rect x="200" y="418" width="4" height="4" fill="#c0c0f8"/><rect x="204" y="418" width="4" height="4" fill="#6868ee"/><rect x="164" y="422" width="4" height="4" fill="#c0c0f8"/><rect x="168" y="422" width="4" height="4" fill="#a0a0f4"/><rect x="172" y="422" width="4" height="4" fill="#8080f0"/><rect x="176" y="422" width="4" height="4" fill="#6868ee"/><rect x="180" y="422" width="4" height="4" fill="#c0c0f8"/><rect x="184" y="422" width="4" height="4" fill="#6868ee"/><rect x="188" y="422" width="4" height="4" fill="#9090f2"/><rect x="192" y="422" width="4" height="4" fill="#9090f2"/><rect x="196" y="422" width="4" height="4" fill="#d8d8fa"/><rect x="200" y="422" width="4" height="4" fill="#9090f2"/><rect x="204" y="422" width="4" height="4" fill="#b0b0f6"/><rect x="164" y="426" width="4" height="4" fill="#c8c8f8"/><rect x="168" y="426" width="4" height="4" fill="#e8e8fd"/><rect x="172" y="426" width="4" height="4" fill="#a8a8f4"/><rect x="176" y="426" width="4" height="4" fill="#b4b4f6"/><rect x="180" y="426" width="4" height="4" fill="#b4b4f6"/><rect x="184" y="426" width="4" height="4" fill="#b4b4f6"/><rect x="188" y="426" width="4" height="4" fill="#c8c8f8"/><rect x="192" y="426" width="4" height="4" fill="#dcdcfb"/><rect x="196" y="426" width="4" height="4" fill="#c8c8f8"/><rect x="200" y="426" width="4" height="4" fill="#e8e8fd"/><rect x="204" y="426" width="4" height="4" fill="#e8e8fd"/><rect x="259" y="404" width="102" height="6" fill="#f5f5f5"/><rect x="268" y="414" width="4" height="4" fill="#c0bcb8"/><rect x="272" y="414" width="4" height="4" fill="#d8d4d0"/><rect x="276" y="414" width="4" height="4" fill="#c8ccd2"/><rect x="280" y="414" width="4" height="4" fill="#d4ccc0"/><rect x="284" y="414" width="4" height="4" fill="#c8ccd2"/><rect x="288" y="414" width="4" height="4" fill="#e6e4e2"/><rect x="292" y="414" width="4" height="4" fill="#e0e0dc"/><rect x="296" y="414" width="4" height="4" fill="#d8d4d0"/><rect x="300" y="414" width="4" height="4" fill="#e0e0dc"/><rect x="304" y="414" width="4" height="4" fill="#d8d4d0"/><rect x="308" y="414" width="4" height="4" fill="#e0e0dc"/><rect x="312" y="414" width="4" height="4" fill="#e0e0dc"/><rect x="316" y="414" width="4" height="4" fill="#e6e4e2"/><rect x="320" y="414" width="4" height="4" fill="#e0e0dc"/><rect x="324" y="414" width="4" height="4" fill="#e6e4e2"/><rect x="328" y="414" width="4" height="4" fill="#e6e4e2"/><rect x="332" y="414" width="4" height="4" fill="#d4ccc0"/><rect x="336" y="414" width="4" height="4" fill="#c0bcb8"/><rect x="340" y="414" width="4" height="4" fill="#c0bcb8"/><rect x="344" y="414" width="4" height="4" fill="#d4ccc0"/><rect x="348" y="414" width="4" height="4" fill="#d8d4d0"/><rect x="352" y="414" width="4" height="4" fill="#e0e0dc"/><rect x="264" y="418" width="4" height="4" fill="#808088"/><rect x="268" y="418" width="4" height="4" fill="#909090"/><rect x="272" y="418" width="4" height="4" fill="#bfbab4"/><rect x="276" y="418" width="4" height="4" fill="#c8c4c0"/><rect x="280" y="418" width="4" height="4" fill="#a8a098"/><rect x="284" y="418" width="4" height="4" fill="#bfbab4"/><rect x="288" y="418" width="4" height="4" fill="#9898a0"/><rect x="292" y="418" width="4" height="4" fill="#a8a098"/><rect x="296" y="418" width="4" height="4" fill="#b8b0a8"/><rect x="300" y="418" width="4" height="4" fill="#bfbab4"/><rect x="304" y="418" width="4" height="4" fill="#c8c4c0"/><rect x="308" y="418" width="4" height="4" fill="#c8c4c0"/><rect x="312" y="418" width="4" height="4" fill="#bfbab4"/><rect x="316" y="418" width="4" height="4" fill="#d0ccc8"/><rect x="320" y="418" width="4" height="4" fill="#9898a0"/><rect x="324" y="418" width="4" height="4" fill="#b8b0a8"/><rect x="328" y="418" width="4" height="4" fill="#a8a098"/><rect x="332" y="418" width="4" height="4" fill="#909090"/><rect x="336" y="418" width="4" height="4" fill="#a8a098"/><rect x="340" y="418" width="4" height="4" fill="#d0ccc8"/><rect x="344" y="418" width="4" height="4" fill="#909090"/><rect x="348" y="418" width="4" height="4" fill="#909090"/><rect x="352" y="418" width="4" height="4" fill="#b8b0a8"/><rect x="264" y="422" width="4" height="4" fill="#a8a098"/><rect x="268" y="422" width="4" height="4" fill="#a0a8b0"/><rect x="272" y="422" width="4" height="4" fill="#a0a8b0"/><rect x="276" y="422" width="4" height="4" fill="#d0ccc8"/><rect x="280" y="422" width="4" height="4" fill="#bfbab4"/><rect x="284" y="422" width="4" height="4" fill="#a0a8b0"/><rect x="288" y="422" width="4" height="4" fill="#c8c4c0"/><rect x="292" y="422" width="4" height="4" fill="#bfbab4"/><rect x="296" y="422" width="4" height="4" fill="#a0a8b0"/><rect x="300" y="422" width="4" height="4" fill="#c8c4c0"/><rect x="304" y="422" width="4" height="4" fill="#b0a898"/><rect x="308" y="422" width="4" height="4" fill="#d0ccc8"/><rect x="312" y="422" width="4" height="4" fill="#c8c4c0"/><rect x="316" y="422" width="4" height="4" fill="#bfbab4"/><rect x="320" y="422" width="4" height="4" fill="#bfbab4"/><rect x="324" y="422" width="4" height="4" fill="#a8a098"/><rect x="328" y="422" width="4" height="4" fill="#c8c4c0"/><rect x="332" y="422" width="4" height="4" fill="#a0a8b0"/><rect x="336" y="422" width="4" height="4" fill="#d0ccc8"/><rect x="340" y="422" width="4" height="4" fill="#b8b0a8"/><rect x="344" y="422" width="4" height="4" fill="#9898a0"/><rect x="348" y="422" width="4" height="4" fill="#a8a098"/><rect x="352" y="422" width="4" height="4" fill="#808088"/><rect x="268" y="426" width="4" height="4" fill="#e6e4e2"/><rect x="272" y="426" width="4" height="4" fill="#d8d4d0"/><rect x="276" y="426" width="4" height="4" fill="#c0bcb8"/><rect x="280" y="426" width="4" height="4" fill="#d8d4d0"/><rect x="284" y="426" width="4" height="4" fill="#c0bcb8"/><rect x="288" y="426" width="4" height="4" fill="#e0e0dc"/><rect x="292" y="426" width="4" height="4" fill="#e6e4e2"/><rect x="296" y="426" width="4" height="4" fill="#e0e0dc"/><rect x="300" y="426" width="4" height="4" fill="#d8d4d0"/><rect x="304" y="426" width="4" height="4" fill="#c0bcb8"/><rect x="312" y="426" width="4" height="4" fill="#e6e4e2"/><rect x="316" y="426" width="4" height="4" fill="#d8d4d0"/><rect x="320" y="426" width="4" height="4" fill="#c0bcb8"/><rect x="324" y="426" width="4" height="4" fill="#c0bcb8"/><rect x="328" y="426" width="4" height="4" fill="#d4ccc0"/><rect x="332" y="426" width="4" height="4" fill="#d8d4d0"/><rect x="336" y="426" width="4" height="4" fill="#c0bcb8"/><rect x="340" y="426" width="4" height="4" fill="#c8ccd2"/><rect x="344" y="426" width="4" height="4" fill="#c8ccd2"/><rect x="348" y="426" width="4" height="4" fill="#c8ccd2"/><rect x="159" y="435" width="60" height="6" fill="#f5f5f5"/><rect x="164" y="445" width="4" height="4" fill="#b4b4f6"/><rect x="172" y="445" width="4" height="4" fill="#e8e8fd"/><rect x="176" y="445" width="4" height="4" fill="#b4b4f6"/><rect x="180" y="445" width="4" height="4" fill="#c8c8f8"/><rect x="184" y="445" width="4" height="4" fill="#c8c8f8"/><rect x="188" y="445" width="4" height="4" fill="#c8c8f8"/><rect x="192" y="445" width="4" height="4" fill="#c8c8f8"/><rect x="196" y="445" width="4" height="4" fill="#dcdcfb"/><rect x="200" y="445" width="4" height="4" fill="#c8c8f8"/><rect x="204" y="445" width="4" height="4" fill="#b4b4f6"/><rect x="164" y="449" width="4" height="4" fill="#8080f0"/><rect x="168" y="449" width="4" height="4" fill="#c0c0f8"/><rect x="172" y="449" width="4" height="4" fill="#8080f0"/><rect x="176" y="449" width="4" height="4" fill="#6868ee"/><rect x="180" y="449" width="4" height="4" fill="#d8d8fa"/><rect x="184" y="449" width="4" height="4" fill="#a0a0f4"/><rect x="192" y="449" width="4" height="4" fill="#9090f2"/><rect x="196" y="449" width="4" height="4" fill="#b0b0f6"/><rect x="204" y="449" width="4" height="4" fill="#a0a0f4"/><rect x="168" y="453" width="4" height="4" fill="#a0a0f4"/><rect x="172" y="453" width="4" height="4" fill="#d8d8fa"/><rect x="176" y="453" width="4" height="4" fill="#6868ee"/><rect x="180" y="453" width="4" height="4" fill="#d8d8fa"/><rect x="184" y="453" width="4" height="4" fill="#8080f0"/><rect x="188" y="453" width="4" height="4" fill="#c0c0f8"/><rect x="192" y="453" width="4" height="4" fill="#6868ee"/><rect x="196" y="453" width="4" height="4" fill="#d8d8fa"/><rect x="200" y="453" width="4" height="4" fill="#d8d8fa"/><rect x="204" y="453" width="4" height="4" fill="#a0a0f4"/><rect x="164" y="457" width="4" height="4" fill="#a8a8f4"/><rect x="172" y="457" width="4" height="4" fill="#a8a8f4"/><rect x="180" y="457" width="4" height="4" fill="#a8a8f4"/><rect x="184" y="457" width="4" height="4" fill="#e8e8fd"/><rect x="188" y="457" width="4" height="4" fill="#e8e8fd"/><rect x="192" y="457" width="4" height="4" fill="#b4b4f6"/><rect x="196" y="457" width="4" height="4" fill="#e8e8fd"/><rect x="200" y="457" width="4" height="4" fill="#a8a8f4"/><rect x="204" y="457" width="4" height="4" fill="#b4b4f6"/><rect x="159" y="466" width="60" height="6" fill="#f5f5f5"/><rect x="164" y="476" width="4" height="4" fill="#a8a8f4"/><rect x="168" y="476" width="4" height="4" fill="#b4b4f6"/><rect x="172" y="476" width="4" height="4" fill="#dcdcfb"/><rect x="176" y="476" width="4" height="4" fill="#dcdcfb"/><rect x="180" y="476" width="4" height="4" fill="#b4b4f6"/><rect x="184" y="476" width="4" height="4" fill="#e8e8fd"/><rect x="188" y="476" width="4" height="4" fill="#dcdcfb"/><rect x="196" y="476" width="4" height="4" fill="#e8e8fd"/><rect x="200" y="476" width="4" height="4" fill="#dcdcfb"/><rect x="204" y="476" width="4" height="4" fill="#dcdcfb"/><rect x="164" y="480" width="4" height="4" fill="#d8d8fa"/><rect x="172" y="480" width="4" height="4" fill="#d8d8fa"/><rect x="176" y="480" width="4" height="4" fill="#6868ee"/><rect x="180" y="480" width="4" height="4" fill="#a0a0f4"/><rect x="184" y="480" width="4" height="4" fill="#d8d8fa"/><rect x="188" y="480" width="4" height="4" fill="#c0c0f8"/><rect x="192" y="480" width="4" height="4" fill="#d8d8fa"/><rect x="200" y="480" width="4" height="4" fill="#6868ee"/><rect x="204" y="480" width="4" height="4" fill="#8080f0"/><rect x="164" y="484" width="4" height="4" fill="#9090f2"/><rect x="168" y="484" width="4" height="4" fill="#a0a0f4"/><rect x="172" y="484" width="4" height="4" fill="#d8d8fa"/><rect x="176" y="484" width="4" height="4" fill="#8080f0"/><rect x="180" y="484" width="4" height="4" fill="#b0b0f6"/><rect x="184" y="484" width="4" height="4" fill="#8080f0"/><rect x="188" y="484" width="4" height="4" fill="#9090f2"/><rect x="192" y="484" width="4" height="4" fill="#b0b0f6"/><rect x="196" y="484" width="4" height="4" fill="#d8d8fa"/><rect x="200" y="484" width="4" height="4" fill="#a0a0f4"/><rect x="204" y="484" width="4" height="4" fill="#d8d8fa"/><rect x="168" y="488" width="4" height="4" fill="#e8e8fd"/><rect x="176" y="488" width="4" height="4" fill="#c8c8f8"/><rect x="180" y="488" width="4" height="4" fill="#b4b4f6"/><rect x="184" y="488" width="4" height="4" fill="#c8c8f8"/><rect x="192" y="488" width="4" height="4" fill="#a8a8f4"/><rect x="196" y="488" width="4" height="4" fill="#dcdcfb"/><rect x="200" y="488" width="4" height="4" fill="#a8a8f4"/><rect x="204" y="488" width="4" height="4" fill="#c8c8f8"/><rect x="259" y="466" width="102" height="6" fill="#f5f5f5"/><rect x="264" y="476" width="4" height="4" fill="#d4ccc0"/><rect x="268" y="476" width="4" height="4" fill="#c0bcb8"/><rect x="276" y="476" width="4" height="4" fill="#c0bcb8"/><rect x="280" y="476" width="4" height="4" fill="#d8d4d0"/><rect x="284" y="476" width="4" height="4" fill="#d4ccc0"/><rect x="292" y="476" width="4" height="4" fill="#c8ccd2"/><rect x="296" y="476" width="4" height="4" fill="#e6e4e2"/><rect x="300" y="476" width="4" height="4" fill="#e6e4e2"/><rect x="304" y="476" width="4" height="4" fill="#d8d4d0"/><rect x="308" y="476" width="4" height="4" fill="#d4ccc0"/><rect x="312" y="476" width="4" height="4" fill="#c0bcb8"/><rect x="316" y="476" width="4" height="4" fill="#d8d4d0"/><rect x="320" y="476" width="4" height="4" fill="#c8ccd2"/><rect x="324" y="476" width="4" height="4" fill="#d4ccc0"/><rect x="328" y="476" width="4" height="4" fill="#d4ccc0"/><rect x="332" y="476" width="4" height="4" fill="#c0bcb8"/><rect x="336" y="476" width="4" height="4" fill="#e0e0dc"/><rect x="340" y="476" width="4" height="4" fill="#d8d4d0"/><rect x="344" y="476" width="4" height="4" fill="#e0e0dc"/><rect x="348" y="476" width="4" height="4" fill="#d8d4d0"/><rect x="352" y="476" width="4" height="4" fill="#d4ccc0"/><rect x="264" y="480" width="4" height="4" fill="#a8a098"/><rect x="268" y="480" width="4" height="4" fill="#d0ccc8"/><rect x="272" y="480" width="4" height="4" fill="#b0a898"/><rect x="276" y="480" width="4" height="4" fill="#b8b0a8"/><rect x="280" y="480" width="4" height="4" fill="#d0ccc8"/><rect x="284" y="480" width="4" height="4" fill="#bfbab4"/><rect x="288" y="480" width="4" height="4" fill="#d0ccc8"/><rect x="292" y="480" width="4" height="4" fill="#9898a0"/><rect x="296" y="480" width="4" height="4" fill="#b8b0a8"/><rect x="300" y="480" width="4" height="4" fill="#c8c4c0"/><rect x="304" y="480" width="4" height="4" fill="#bfbab4"/><rect x="308" y="480" width="4" height="4" fill="#9898a0"/><rect x="312" y="480" width="4" height="4" fill="#d0ccc8"/><rect x="316" y="480" width="4" height="4" fill="#a0a8b0"/><rect x="320" y="480" width="4" height="4" fill="#9898a0"/><rect x="324" y="480" width="4" height="4" fill="#909090"/><rect x="328" y="480" width="4" height="4" fill="#c8c4c0"/><rect x="332" y="480" width="4" height="4" fill="#d0ccc8"/><rect x="336" y="480" width="4" height="4" fill="#d0ccc8"/><rect x="340" y="480" width="4" height="4" fill="#909090"/><rect x="344" y="480" width="4" height="4" fill="#a0a8b0"/><rect x="348" y="480" width="4" height="4" fill="#a0a8b0"/><rect x="352" y="480" width="4" height="4" fill="#909090"/><rect x="264" y="484" width="4" height="4" fill="#b8b0a8"/><rect x="268" y="484" width="4" height="4" fill="#b0a898"/><rect x="272" y="484" width="4" height="4" fill="#a0a8b0"/><rect x="276" y="484" width="4" height="4" fill="#a8a098"/><rect x="280" y="484" width="4" height="4" fill="#808088"/><rect x="284" y="484" width="4" height="4" fill="#9898a0"/><rect x="288" y="484" width="4" height="4" fill="#b0a898"/><rect x="292" y="484" width="4" height="4" fill="#a8a098"/><rect x="296" y="484" width="4" height="4" fill="#c8c4c0"/><rect x="300" y="484" width="4" height="4" fill="#a0a8b0"/><rect x="304" y="484" width="4" height="4" fill="#b8b0a8"/><rect x="308" y="484" width="4" height="4" fill="#c8c4c0"/><rect x="312" y="484" width="4" height="4" fill="#909090"/><rect x="316" y="484" width="4" height="4" fill="#9898a0"/><rect x="320" y="484" width="4" height="4" fill="#d0ccc8"/><rect x="324" y="484" width="4" height="4" fill="#9898a0"/><rect x="328" y="484" width="4" height="4" fill="#808088"/><rect x="332" y="484" width="4" height="4" fill="#b8b0a8"/><rect x="336" y="484" width="4" height="4" fill="#bfbab4"/><rect x="340" y="484" width="4" height="4" fill="#a0a8b0"/><rect x="344" y="484" width="4" height="4" fill="#c8c4c0"/><rect x="348" y="484" width="4" height="4" fill="#909090"/><rect x="352" y="484" width="4" height="4" fill="#b8b0a8"/><rect x="264" y="488" width="4" height="4" fill="#c8ccd2"/><rect x="268" y="488" width="4" height="4" fill="#e6e4e2"/><rect x="272" y="488" width="4" height="4" fill="#e0e0dc"/><rect x="276" y="488" width="4" height="4" fill="#d4ccc0"/><rect x="284" y="488" width="4" height="4" fill="#e6e4e2"/><rect x="288" y="488" width="4" height="4" fill="#e0e0dc"/><rect x="292" y="488" width="4" height="4" fill="#c0bcb8"/><rect x="296" y="488" width="4" height="4" fill="#c8ccd2"/><rect x="300" y="488" width="4" height="4" fill="#e0e0dc"/><rect x="304" y="488" width="4" height="4" fill="#c8ccd2"/><rect x="308" y="488" width="4" height="4" fill="#c8ccd2"/><rect x="312" y="488" width="4" height="4" fill="#c0bcb8"/><rect x="316" y="488" width="4" height="4" fill="#c0bcb8"/><rect x="320" y="488" width="4" height="4" fill="#c0bcb8"/><rect x="324" y="488" width="4" height="4" fill="#e0e0dc"/><rect x="328" y="488" width="4" height="4" fill="#c0bcb8"/><rect x="336" y="488" width="4" height="4" fill="#d8d4d0"/><rect x="340" y="488" width="4" height="4" fill="#d4ccc0"/><rect x="344" y="488" width="4" height="4" fill="#e6e4e2"/><rect x="348" y="488" width="4" height="4" fill="#c0bcb8"/><rect x="352" y="488" width="4" height="4" fill="#e6e4e2"/><rect x="159" y="497" width="60" height="6" fill="#f5f5f5"/><rect x="164" y="507" width="4" height="4" fill="#b4b4f6"/><rect x="168" y="507" width="4" height="4" fill="#e8e8fd"/><rect x="172" y="507" width="4" height="4" fill="#dcdcfb"/><rect x="176" y="507" width="4" height="4" fill="#b4b4f6"/><rect x="180" y="507" width="4" height="4" fill="#e8e8fd"/><rect x="184" y="507" width="4" height="4" fill="#b4b4f6"/><rect x="188" y="507" width="4" height="4" fill="#a8a8f4"/><rect x="192" y="507" width="4" height="4" fill="#e8e8fd"/><rect x="204" y="507" width="4" height="4" fill="#dcdcfb"/><rect x="164" y="511" width="4" height="4" fill="#9090f2"/><rect x="168" y="511" width="4" height="4" fill="#a0a0f4"/><rect x="172" y="511" width="4" height="4" fill="#c0c0f8"/><rect x="176" y="511" width="4" height="4" fill="#d8d8fa"/><rect x="180" y="511" width="4" height="4" fill="#8080f0"/><rect x="184" y="511" width="4" height="4" fill="#b0b0f6"/><rect x="188" y="511" width="4" height="4" fill="#b0b0f6"/><rect x="192" y="511" width="4" height="4" fill="#6868ee"/><rect x="196" y="511" width="4" height="4" fill="#8080f0"/><rect x="200" y="511" width="4" height="4" fill="#9090f2"/><rect x="164" y="515" width="4" height="4" fill="#d8d8fa"/><rect x="168" y="515" width="4" height="4" fill="#b0b0f6"/><rect x="176" y="515" width="4" height="4" fill="#b0b0f6"/><rect x="180" y="515" width="4" height="4" fill="#d8d8fa"/><rect x="184" y="515" width="4" height="4" fill="#b0b0f6"/><rect x="188" y="515" width="4" height="4" fill="#8080f0"/><rect x="192" y="515" width="4" height="4" fill="#d8d8fa"/><rect x="196" y="515" width="4" height="4" fill="#d8d8fa"/><rect x="200" y="515" width="4" height="4" fill="#8080f0"/><rect x="204" y="515" width="4" height="4" fill="#9090f2"/><rect x="164" y="519" width="4" height="4" fill="#c8c8f8"/><rect x="172" y="519" width="4" height="4" fill="#b4b4f6"/><rect x="180" y="519" width="4" height="4" fill="#b4b4f6"/><rect x="184" y="519" width="4" height="4" fill="#b4b4f6"/><rect x="192" y="519" width="4" height="4" fill="#c8c8f8"/><rect x="196" y="519" width="4" height="4" fill="#a8a8f4"/><rect x="200" y="519" width="4" height="4" fill="#e8e8fd"/><rect x="259" y="497" width="102" height="6" fill="#f5f5f5"/><rect x="264" y="507" width="4" height="4" fill="#e0e0dc"/><rect x="268" y="507" width="4" height="4" fill="#d8d4d0"/><rect x="272" y="507" width="4" height="4" fill="#d4ccc0"/><rect x="276" y="507" width="4" height="4" fill="#d4ccc0"/><rect x="280" y="507" width="4" height="4" fill="#d8d4d0"/><rect x="284" y="507" width="4" height="4" fill="#e0e0dc"/><rect x="288" y="507" width="4" height="4" fill="#c0bcb8"/><rect x="296" y="507" width="4" height="4" fill="#d4ccc0"/><rect x="300" y="507" width="4" height="4" fill="#d8d4d0"/><rect x="304" y="507" width="4" height="4" fill="#e6e4e2"/><rect x="308" y="507" width="4" height="4" fill="#c0bcb8"/><rect x="312" y="507" width="4" height="4" fill="#d8d4d0"/><rect x="316" y="507" width="4" height="4" fill="#c0bcb8"/><rect x="320" y="507" width="4" height="4" fill="#d8d4d0"/><rect x="324" y="507" width="4" height="4" fill="#d8d4d0"/><rect x="328" y="507" width="4" height="4" fill="#d8d4d0"/><rect x="332" y="507" width="4" height="4" fill="#e0e0dc"/><rect x="336" y="507" width="4" height="4" fill="#c0bcb8"/><rect x="340" y="507" width="4" height="4" fill="#d8d4d0"/><rect x="344" y="507" width="4" height="4" fill="#c0bcb8"/><rect x="348" y="507" width="4" height="4" fill="#e6e4e2"/><rect x="352" y="507" width="4" height="4" fill="#d8d4d0"/><rect x="264" y="511" width="4" height="4" fill="#bfbab4"/><rect x="268" y="511" width="4" height="4" fill="#909090"/><rect x="272" y="511" width="4" height="4" fill="#a0a8b0"/><rect x="276" y="511" width="4" height="4" fill="#a8a098"/><rect x="280" y="511" width="4" height="4" fill="#a8a098"/><rect x="284" y="511" width="4" height="4" fill="#808088"/><rect x="288" y="511" width="4" height="4" fill="#a0a8b0"/><rect x="292" y="511" width="4" height="4" fill="#808088"/><rect x="296" y="511" width="4" height="4" fill="#909090"/><rect x="300" y="511" width="4" height="4" fill="#b0a898"/><rect x="304" y="511" width="4" height="4" fill="#808088"/><rect x="308" y="511" width="4" height="4" fill="#909090"/><rect x="312" y="511" width="4" height="4" fill="#9898a0"/><rect x="316" y="511" width="4" height="4" fill="#b8b0a8"/><rect x="320" y="511" width="4" height="4" fill="#9898a0"/><rect x="324" y="511" width="4" height="4" fill="#d0ccc8"/><rect x="328" y="511" width="4" height="4" fill="#909090"/><rect x="332" y="511" width="4" height="4" fill="#808088"/><rect x="336" y="511" width="4" height="4" fill="#a0a8b0"/><rect x="340" y="511" width="4" height="4" fill="#808088"/><rect x="344" y="511" width="4" height="4" fill="#808088"/><rect x="348" y="511" width="4" height="4" fill="#a8a098"/><rect x="352" y="511" width="4" height="4" fill="#808088"/><rect x="264" y="515" width="4" height="4" fill="#808088"/><rect x="268" y="515" width="4" height="4" fill="#c8c4c0"/><rect x="272" y="515" width="4" height="4" fill="#d0ccc8"/><rect x="276" y="515" width="4" height="4" fill="#c8c4c0"/><rect x="280" y="515" width="4" height="4" fill="#a0a8b0"/><rect x="284" y="515" width="4" height="4" fill="#b0a898"/><rect x="288" y="515" width="4" height="4" fill="#d0ccc8"/><rect x="292" y="515" width="4" height="4" fill="#a8a098"/><rect x="296" y="515" width="4" height="4" fill="#9898a0"/><rect x="300" y="515" width="4" height="4" fill="#808088"/><rect x="304" y="515" width="4" height="4" fill="#bfbab4"/><rect x="308" y="515" width="4" height="4" fill="#909090"/><rect x="312" y="515" width="4" height="4" fill="#b8b0a8"/><rect x="316" y="515" width="4" height="4" fill="#909090"/><rect x="320" y="515" width="4" height="4" fill="#c8c4c0"/><rect x="324" y="515" width="4" height="4" fill="#c8c4c0"/><rect x="328" y="515" width="4" height="4" fill="#a8a098"/><rect x="332" y="515" width="4" height="4" fill="#909090"/><rect x="336" y="515" width="4" height="4" fill="#a0a8b0"/><rect x="340" y="515" width="4" height="4" fill="#a8a098"/><rect x="344" y="515" width="4" height="4" fill="#909090"/><rect x="348" y="515" width="4" height="4" fill="#bfbab4"/><rect x="352" y="515" width="4" height="4" fill="#b8b0a8"/><rect x="264" y="519" width="4" height="4" fill="#e0e0dc"/><rect x="268" y="519" width="4" height="4" fill="#c8ccd2"/><rect x="272" y="519" width="4" height="4" fill="#e0e0dc"/><rect x="276" y="519" width="4" height="4" fill="#e0e0dc"/><rect x="280" y="519" width="4" height="4" fill="#e6e4e2"/><rect x="284" y="519" width="4" height="4" fill="#d8d4d0"/><rect x="288" y="519" width="4" height="4" fill="#c0bcb8"/><rect x="292" y="519" width="4" height="4" fill="#e0e0dc"/><rect x="296" y="519" width="4" height="4" fill="#d4ccc0"/><rect x="300" y="519" width="4" height="4" fill="#e6e4e2"/><rect x="304" y="519" width="4" height="4" fill="#d4ccc0"/><rect x="308" y="519" width="4" height="4" fill="#d8d4d0"/><rect x="312" y="519" width="4" height="4" fill="#d4ccc0"/><rect x="316" y="519" width="4" height="4" fill="#e6e4e2"/><rect x="320" y="519" width="4" height="4" fill="#d8d4d0"/><rect x="324" y="519" width="4" height="4" fill="#e0e0dc"/><rect x="328" y="519" width="4" height="4" fill="#d8d4d0"/><rect x="332" y="519" width="4" height="4" fill="#e0e0dc"/><rect x="336" y="519" width="4" height="4" fill="#e0e0dc"/><rect x="340" y="519" width="4" height="4" fill="#c8ccd2"/><rect x="344" y="519" width="4" height="4" fill="#d4ccc0"/><rect x="348" y="519" width="4" height="4" fill="#e0e0dc"/><rect x="159" y="528" width="60" height="6" fill="#f5f5f5"/><rect x="164" y="538" width="4" height="4" fill="#c8c8f8"/><rect x="168" y="538" width="4" height="4" fill="#dcdcfb"/><rect x="172" y="538" width="4" height="4" fill="#c8c8f8"/><rect x="176" y="538" width="4" height="4" fill="#e8e8fd"/><rect x="180" y="538" width="4" height="4" fill="#a8a8f4"/><rect x="184" y="538" width="4" height="4" fill="#c8c8f8"/><rect x="192" y="538" width="4" height="4" fill="#c8c8f8"/><rect x="196" y="538" width="4" height="4" fill="#c8c8f8"/><rect x="200" y="538" width="4" height="4" fill="#e8e8fd"/><rect x="204" y="538" width="4" height="4" fill="#c8c8f8"/><rect x="168" y="542" width="4" height="4" fill="#6868ee"/><rect x="172" y="542" width="4" height="4" fill="#9090f2"/><rect x="176" y="542" width="4" height="4" fill="#a0a0f4"/><rect x="184" y="542" width="4" height="4" fill="#8080f0"/><rect x="196" y="542" width="4" height="4" fill="#b0b0f6"/><rect x="204" y="542" width="4" height="4" fill="#8080f0"/><rect x="164" y="546" width="4" height="4" fill="#b0b0f6"/><rect x="168" y="546" width="4" height="4" fill="#d8d8fa"/><rect x="172" y="546" width="4" height="4" fill="#6868ee"/><rect x="176" y="546" width="4" height="4" fill="#a0a0f4"/><rect x="180" y="546" width="4" height="4" fill="#8080f0"/><rect x="188" y="546" width="4" height="4" fill="#c0c0f8"/><rect x="192" y="546" width="4" height="4" fill="#6868ee"/><rect x="196" y="546" width="4" height="4" fill="#8080f0"/><rect x="200" y="546" width="4" height="4" fill="#c0c0f8"/><rect x="204" y="546" width="4" height="4" fill="#8080f0"/><rect x="164" y="550" width="4" height="4" fill="#a8a8f4"/><rect x="168" y="550" width="4" height="4" fill="#dcdcfb"/><rect x="172" y="550" width="4" height="4" fill="#c8c8f8"/><rect x="176" y="550" width="4" height="4" fill="#dcdcfb"/><rect x="180" y="550" width="4" height="4" fill="#dcdcfb"/><rect x="188" y="550" width="4" height="4" fill="#e8e8fd"/><rect x="200" y="550" width="4" height="4" fill="#a8a8f4"/><rect x="259" y="528" width="102" height="6" fill="#f5f5f5"/><rect x="268" y="538" width="4" height="4" fill="#d8d4d0"/><rect x="272" y="538" width="4" height="4" fill="#d4ccc0"/><rect x="280" y="538" width="4" height="4" fill="#e6e4e2"/><rect x="284" y="538" width="4" height="4" fill="#c0bcb8"/><rect x="288" y="538" width="4" height="4" fill="#c8ccd2"/><rect x="292" y="538" width="4" height="4" fill="#d8d4d0"/><rect x="296" y="538" width="4" height="4" fill="#d4ccc0"/><rect x="300" y="538" width="4" height="4" fill="#e6e4e2"/><rect x="304" y="538" width="4" height="4" fill="#e6e4e2"/><rect x="308" y="538" width="4" height="4" fill="#d4ccc0"/><rect x="312" y="538" width="4" height="4" fill="#d8d4d0"/><rect x="316" y="538" width="4" height="4" fill="#c8ccd2"/><rect x="320" y="538" width="4" height="4" fill="#e6e4e2"/><rect x="324" y="538" width="4" height="4" fill="#d8d4d0"/><rect x="328" y="538" width="4" height="4" fill="#d4ccc0"/><rect x="332" y="538" width="4" height="4" fill="#e0e0dc"/><rect x="336" y="538" width="4" height="4" fill="#c0bcb8"/><rect x="344" y="538" width="4" height="4" fill="#c8ccd2"/><rect x="348" y="538" width="4" height="4" fill="#e6e4e2"/><rect x="264" y="542" width="4" height="4" fill="#a0a8b0"/><rect x="268" y="542" width="4" height="4" fill="#c8c4c0"/><rect x="272" y="542" width="4" height="4" fill="#a0a8b0"/><rect x="276" y="542" width="4" height="4" fill="#9898a0"/><rect x="280" y="542" width="4" height="4" fill="#a0a8b0"/><rect x="284" y="542" width="4" height="4" fill="#a8a098"/><rect x="288" y="542" width="4" height="4" fill="#bfbab4"/><rect x="292" y="542" width="4" height="4" fill="#9898a0"/><rect x="296" y="542" width="4" height="4" fill="#bfbab4"/><rect x="300" y="542" width="4" height="4" fill="#b0a898"/><rect x="304" y="542" width="4" height="4" fill="#d0ccc8"/><rect x="308" y="542" width="4" height="4" fill="#808088"/><rect x="312" y="542" width="4" height="4" fill="#9898a0"/><rect x="316" y="542" width="4" height="4" fill="#c8c4c0"/><rect x="320" y="542" width="4" height="4" fill="#c8c4c0"/><rect x="324" y="542" width="4" height="4" fill="#b8b0a8"/><rect x="328" y="542" width="4" height="4" fill="#909090"/><rect x="332" y="542" width="4" height="4" fill="#9898a0"/><rect x="336" y="542" width="4" height="4" fill="#808088"/><rect x="340" y="542" width="4" height="4" fill="#c8c4c0"/><rect x="344" y="542" width="4" height="4" fill="#c8c4c0"/><rect x="348" y="542" width="4" height="4" fill="#bfbab4"/><rect x="352" y="542" width="4" height="4" fill="#a8a098"/><rect x="264" y="546" width="4" height="4" fill="#b0a898"/><rect x="268" y="546" width="4" height="4" fill="#909090"/><rect x="272" y="546" width="4" height="4" fill="#d0ccc8"/><rect x="276" y="546" width="4" height="4" fill="#909090"/><rect x="280" y="546" width="4" height="4" fill="#a0a8b0"/><rect x="284" y="546" width="4" height="4" fill="#808088"/><rect x="288" y="546" width="4" height="4" fill="#b0a898"/><rect x="292" y="546" width="4" height="4" fill="#b0a898"/><rect x="296" y="546" width="4" height="4" fill="#a8a098"/><rect x="300" y="546" width="4" height="4" fill="#909090"/><rect x="304" y="546" width="4" height="4" fill="#b8b0a8"/><rect x="308" y="546" width="4" height="4" fill="#c8c4c0"/><rect x="312" y="546" width="4" height="4" fill="#b0a898"/><rect x="316" y="546" width="4" height="4" fill="#d0ccc8"/><rect x="320" y="546" width="4" height="4" fill="#a8a098"/><rect x="324" y="546" width="4" height="4" fill="#b8b0a8"/><rect x="328" y="546" width="4" height="4" fill="#909090"/><rect x="332" y="546" width="4" height="4" fill="#a8a098"/><rect x="336" y="546" width="4" height="4" fill="#bfbab4"/><rect x="340" y="546" width="4" height="4" fill="#c8c4c0"/><rect x="344" y="546" width="4" height="4" fill="#c8c4c0"/><rect x="348" y="546" width="4" height="4" fill="#9898a0"/><rect x="352" y="546" width="4" height="4" fill="#a0a8b0"/><rect x="264" y="550" width="4" height="4" fill="#d8d4d0"/><rect x="268" y="550" width="4" height="4" fill="#c0bcb8"/><rect x="272" y="550" width="4" height="4" fill="#c8ccd2"/><rect x="276" y="550" width="4" height="4" fill="#e0e0dc"/><rect x="280" y="550" width="4" height="4" fill="#d4ccc0"/><rect x="284" y="550" width="4" height="4" fill="#c0bcb8"/><rect x="288" y="550" width="4" height="4" fill="#c8ccd2"/><rect x="292" y="550" width="4" height="4" fill="#c0bcb8"/><rect x="296" y="550" width="4" height="4" fill="#c8ccd2"/><rect x="300" y="550" width="4" height="4" fill="#d4ccc0"/><rect x="304" y="550" width="4" height="4" fill="#c8ccd2"/><rect x="308" y="550" width="4" height="4" fill="#d8d4d0"/><rect x="312" y="550" width="4" height="4" fill="#e6e4e2"/><rect x="316" y="550" width="4" height="4" fill="#e6e4e2"/><rect x="320" y="550" width="4" height="4" fill="#e6e4e2"/><rect x="324" y="550" width="4" height="4" fill="#d4ccc0"/><rect x="328" y="550" width="4" height="4" fill="#e6e4e2"/><rect x="336" y="550" width="4" height="4" fill="#c0bcb8"/><rect x="340" y="550" width="4" height="4" fill="#d4ccc0"/><rect x="344" y="550" width="4" height="4" fill="#e0e0dc"/><rect x="348" y="550" width="4" height="4" fill="#d4ccc0"/><rect x="159" y="559" width="60" height="6" fill="#f5f5f5"/><rect x="164" y="569" width="4" height="4" fill="#b4b4f6"/><rect x="168" y="569" width="4" height="4" fill="#dcdcfb"/><rect x="172" y="569" width="4" height="4" fill="#a8a8f4"/><rect x="176" y="569" width="4" height="4" fill="#e8e8fd"/><rect x="180" y="569" width="4" height="4" fill="#b4b4f6"/><rect x="184" y="569" width="4" height="4" fill="#e8e8fd"/><rect x="188" y="569" width="4" height="4" fill="#e8e8fd"/><rect x="192" y="569" width="4" height="4" fill="#b4b4f6"/><rect x="196" y="569" width="4" height="4" fill="#a8a8f4"/><rect x="200" y="569" width="4" height="4" fill="#c8c8f8"/><rect x="204" y="569" width="4" height="4" fill="#e8e8fd"/><rect x="164" y="573" width="4" height="4" fill="#c0c0f8"/><rect x="168" y="573" width="4" height="4" fill="#b0b0f6"/><rect x="172" y="573" width="4" height="4" fill="#a0a0f4"/><rect x="176" y="573" width="4" height="4" fill="#6868ee"/><rect x="180" y="573" width="4" height="4" fill="#6868ee"/><rect x="184" y="573" width="4" height="4" fill="#9090f2"/><rect x="196" y="573" width="4" height="4" fill="#9090f2"/><rect x="200" y="573" width="4" height="4" fill="#c0c0f8"/><rect x="164" y="577" width="4" height="4" fill="#d8d8fa"/><rect x="168" y="577" width="4" height="4" fill="#8080f0"/><rect x="172" y="577" width="4" height="4" fill="#c0c0f8"/><rect x="176" y="577" width="4" height="4" fill="#8080f0"/><rect x="180" y="577" width="4" height="4" fill="#8080f0"/><rect x="184" y="577" width="4" height="4" fill="#c0c0f8"/><rect x="188" y="577" width="4" height="4" fill="#a0a0f4"/><rect x="192" y="577" width="4" height="4" fill="#b0b0f6"/><rect x="164" y="581" width="4" height="4" fill="#e8e8fd"/><rect x="168" y="581" width="4" height="4" fill="#dcdcfb"/><rect x="172" y="581" width="4" height="4" fill="#e8e8fd"/><rect x="176" y="581" width="4" height="4" fill="#b4b4f6"/><rect x="184" y="581" width="4" height="4" fill="#b4b4f6"/><rect x="188" y="581" width="4" height="4" fill="#c8c8f8"/><rect x="192" y="581" width="4" height="4" fill="#b4b4f6"/><rect x="196" y="581" width="4" height="4" fill="#e8e8fd"/><rect x="200" y="581" width="4" height="4" fill="#dcdcfb"/><rect x="204" y="581" width="4" height="4" fill="#dcdcfb"/><rect x="259" y="559" width="102" height="6" fill="#f5f5f5"/><rect x="284" y="569" width="4" height="4" fill="#c8ccd2"/><rect x="288" y="569" width="4" height="4" fill="#e0e0dc"/><rect x="292" y="569" width="4" height="4" fill="#d4ccc0"/><rect x="296" y="569" width="4" height="4" fill="#c8ccd2"/><rect x="300" y="569" width="4" height="4" fill="#c8ccd2"/><rect x="304" y="569" width="4" height="4" fill="#e0e0dc"/><rect x="308" y="569" width="4" height="4" fill="#e0e0dc"/><rect x="312" y="569" width="4" height="4" fill="#c8ccd2"/><rect x="316" y="569" width="4" height="4" fill="#e6e4e2"/><rect x="320" y="569" width="4" height="4" fill="#c8ccd2"/><rect x="324" y="569" width="4" height="4" fill="#c8ccd2"/><rect x="328" y="569" width="4" height="4" fill="#e6e4e2"/><rect x="332" y="569" width="4" height="4" fill="#d8d4d0"/><rect x="284" y="573" width="4" height="4" fill="#b8b0a8"/><rect x="288" y="573" width="4" height="4" fill="#b0a898"/><rect x="292" y="573" width="4" height="4" fill="#a8a098"/><rect x="296" y="573" width="4" height="4" fill="#909090"/><rect x="300" y="573" width="4" height="4" fill="#b8b0a8"/><rect x="304" y="573" width="4" height="4" fill="#9898a0"/><rect x="308" y="573" width="4" height="4" fill="#b0a898"/><rect x="312" y="573" width="4" height="4" fill="#c8c4c0"/><rect x="316" y="573" width="4" height="4" fill="#a0a8b0"/><rect x="320" y="573" width="4" height="4" fill="#bfbab4"/><rect x="324" y="573" width="4" height="4" fill="#909090"/><rect x="328" y="573" width="4" height="4" fill="#9898a0"/><rect x="332" y="573" width="4" height="4" fill="#b8b0a8"/><rect x="284" y="577" width="4" height="4" fill="#bfbab4"/><rect x="288" y="577" width="4" height="4" fill="#909090"/><rect x="292" y="577" width="4" height="4" fill="#808088"/><rect x="296" y="577" width="4" height="4" fill="#a0a8b0"/><rect x="300" y="577" width="4" height="4" fill="#808088"/><rect x="304" y="577" width="4" height="4" fill="#909090"/><rect x="308" y="577" width="4" height="4" fill="#a0a8b0"/><rect x="312" y="577" width="4" height="4" fill="#a0a8b0"/><rect x="316" y="577" width="4" height="4" fill="#bfbab4"/><rect x="320" y="577" width="4" height="4" fill="#d0ccc8"/><rect x="324" y="577" width="4" height="4" fill="#a8a098"/><rect x="328" y="577" width="4" height="4" fill="#909090"/><rect x="332" y="577" width="4" height="4" fill="#a0a8b0"/><rect x="284" y="581" width="4" height="4" fill="#c8ccd2"/><rect x="288" y="581" width="4" height="4" fill="#d4ccc0"/><rect x="292" y="581" width="4" height="4" fill="#e0e0dc"/><rect x="296" y="581" width="4" height="4" fill="#c8ccd2"/><rect x="300" y="581" width="4" height="4" fill="#e0e0dc"/><rect x="304" y="581" width="4" height="4" fill="#c8ccd2"/><rect x="308" y="581" width="4" height="4" fill="#d4ccc0"/><rect x="312" y="581" width="4" height="4" fill="#d8d4d0"/><rect x="316" y="581" width="4" height="4" fill="#c8ccd2"/><rect x="320" y="581" width="4" height="4" fill="#d4ccc0"/><rect x="324" y="581" width="4" height="4" fill="#e0e0dc"/><rect x="328" y="581" width="4" height="4" fill="#e0e0dc"/><rect x="332" y="581" width="4" height="4" fill="#d4ccc0"/><rect x="159" y="590" width="60" height="6" fill="#f5f5f5"/><rect x="164" y="600" width="4" height="4" fill="#e8e8fd"/><rect x="168" y="600" width="4" height="4" fill="#a8a8f4"/><rect x="172" y="600" width="4" height="4" fill="#b4b4f6"/><rect x="176" y="600" width="4" height="4" fill="#b4b4f6"/><rect x="180" y="600" width="4" height="4" fill="#c8c8f8"/><rect x="184" y="600" width="4" height="4" fill="#e8e8fd"/><rect x="188" y="600" width="4" height="4" fill="#a8a8f4"/><rect x="192" y="600" width="4" height="4" fill="#a8a8f4"/><rect x="196" y="600" width="4" height="4" fill="#e8e8fd"/><rect x="200" y="600" width="4" height="4" fill="#dcdcfb"/><rect x="164" y="604" width="4" height="4" fill="#6868ee"/><rect x="168" y="604" width="4" height="4" fill="#b0b0f6"/><rect x="172" y="604" width="4" height="4" fill="#b0b0f6"/><rect x="176" y="604" width="4" height="4" fill="#8080f0"/><rect x="180" y="604" width="4" height="4" fill="#c0c0f8"/><rect x="184" y="604" width="4" height="4" fill="#8080f0"/><rect x="188" y="604" width="4" height="4" fill="#b0b0f6"/><rect x="192" y="604" width="4" height="4" fill="#d8d8fa"/><rect x="196" y="604" width="4" height="4" fill="#d8d8fa"/><rect x="200" y="604" width="4" height="4" fill="#b0b0f6"/><rect x="204" y="604" width="4" height="4" fill="#6868ee"/><rect x="164" y="608" width="4" height="4" fill="#b0b0f6"/><rect x="168" y="608" width="4" height="4" fill="#b0b0f6"/><rect x="172" y="608" width="4" height="4" fill="#a0a0f4"/><rect x="176" y="608" width="4" height="4" fill="#8080f0"/><rect x="180" y="608" width="4" height="4" fill="#b0b0f6"/><rect x="184" y="608" width="4" height="4" fill="#b0b0f6"/><rect x="192" y="608" width="4" height="4" fill="#8080f0"/><rect x="196" y="608" width="4" height="4" fill="#8080f0"/><rect x="200" y="608" width="4" height="4" fill="#c0c0f8"/><rect x="204" y="608" width="4" height="4" fill="#b0b0f6"/><rect x="164" y="612" width="4" height="4" fill="#b4b4f6"/><rect x="168" y="612" width="4" height="4" fill="#c8c8f8"/><rect x="172" y="612" width="4" height="4" fill="#c8c8f8"/><rect x="176" y="612" width="4" height="4" fill="#a8a8f4"/><rect x="180" y="612" width="4" height="4" fill="#e8e8fd"/><rect x="184" y="612" width="4" height="4" fill="#e8e8fd"/><rect x="188" y="612" width="4" height="4" fill="#dcdcfb"/><rect x="192" y="612" width="4" height="4" fill="#a8a8f4"/><rect x="196" y="612" width="4" height="4" fill="#dcdcfb"/><rect x="200" y="612" width="4" height="4" fill="#e8e8fd"/><rect x="204" y="612" width="4" height="4" fill="#c8c8f8"/><rect x="259" y="590" width="102" height="6" fill="#f5f5f5"/><rect x="264" y="600" width="4" height="4" fill="#e0e0dc"/><rect x="268" y="600" width="4" height="4" fill="#d4ccc0"/><rect x="272" y="600" width="4" height="4" fill="#d8d4d0"/><rect x="276" y="600" width="4" height="4" fill="#c0bcb8"/><rect x="280" y="600" width="4" height="4" fill="#c8ccd2"/><rect x="284" y="600" width="4" height="4" fill="#e6e4e2"/><rect x="288" y="600" width="4" height="4" fill="#e6e4e2"/><rect x="292" y="600" width="4" height="4" fill="#c0bcb8"/><rect x="296" y="600" width="4" height="4" fill="#e0e0dc"/><rect x="300" y="600" width="4" height="4" fill="#e6e4e2"/><rect x="304" y="600" width="4" height="4" fill="#d4ccc0"/><rect x="308" y="600" width="4" height="4" fill="#e6e4e2"/><rect x="312" y="600" width="4" height="4" fill="#e0e0dc"/><rect x="316" y="600" width="4" height="4" fill="#d8d4d0"/><rect x="320" y="600" width="4" height="4" fill="#e0e0dc"/><rect x="324" y="600" width="4" height="4" fill="#e6e4e2"/><rect x="328" y="600" width="4" height="4" fill="#e0e0dc"/><rect x="332" y="600" width="4" height="4" fill="#c8ccd2"/><rect x="336" y="600" width="4" height="4" fill="#d4ccc0"/><rect x="340" y="600" width="4" height="4" fill="#e0e0dc"/><rect x="344" y="600" width="4" height="4" fill="#d4ccc0"/><rect x="352" y="600" width="4" height="4" fill="#c0bcb8"/><rect x="264" y="604" width="4" height="4" fill="#808088"/><rect x="268" y="604" width="4" height="4" fill="#a0a8b0"/><rect x="272" y="604" width="4" height="4" fill="#909090"/><rect x="276" y="604" width="4" height="4" fill="#c8c4c0"/><rect x="280" y="604" width="4" height="4" fill="#9898a0"/><rect x="284" y="604" width="4" height="4" fill="#9898a0"/><rect x="288" y="604" width="4" height="4" fill="#a0a8b0"/><rect x="292" y="604" width="4" height="4" fill="#b0a898"/><rect x="296" y="604" width="4" height="4" fill="#bfbab4"/><rect x="300" y="604" width="4" height="4" fill="#b0a898"/><rect x="304" y="604" width="4" height="4" fill="#b8b0a8"/><rect x="308" y="604" width="4" height="4" fill="#d0ccc8"/><rect x="312" y="604" width="4" height="4" fill="#b0a898"/><rect x="316" y="604" width="4" height="4" fill="#d0ccc8"/><rect x="320" y="604" width="4" height="4" fill="#a0a8b0"/><rect x="324" y="604" width="4" height="4" fill="#d0ccc8"/><rect x="328" y="604" width="4" height="4" fill="#a8a098"/><rect x="332" y="604" width="4" height="4" fill="#9898a0"/><rect x="336" y="604" width="4" height="4" fill="#9898a0"/><rect x="340" y="604" width="4" height="4" fill="#a0a8b0"/><rect x="344" y="604" width="4" height="4" fill="#9898a0"/><rect x="348" y="604" width="4" height="4" fill="#909090"/><rect x="352" y="604" width="4" height="4" fill="#c8c4c0"/><rect x="264" y="608" width="4" height="4" fill="#b0a898"/><rect x="268" y="608" width="4" height="4" fill="#d0ccc8"/><rect x="272" y="608" width="4" height="4" fill="#808088"/><rect x="276" y="608" width="4" height="4" fill="#909090"/><rect x="280" y="608" width="4" height="4" fill="#c8c4c0"/><rect x="284" y="608" width="4" height="4" fill="#9898a0"/><rect x="288" y="608" width="4" height="4" fill="#a0a8b0"/><rect x="292" y="608" width="4" height="4" fill="#909090"/><rect x="296" y="608" width="4" height="4" fill="#b0a898"/><rect x="300" y="608" width="4" height="4" fill="#d0ccc8"/><rect x="304" y="608" width="4" height="4" fill="#c8c4c0"/><rect x="308" y="608" width="4" height="4" fill="#b8b0a8"/><rect x="312" y="608" width="4" height="4" fill="#b8b0a8"/><rect x="316" y="608" width="4" height="4" fill="#a0a8b0"/><rect x="320" y="608" width="4" height="4" fill="#d0ccc8"/><rect x="324" y="608" width="4" height="4" fill="#808088"/><rect x="328" y="608" width="4" height="4" fill="#a8a098"/><rect x="332" y="608" width="4" height="4" fill="#b8b0a8"/><rect x="336" y="608" width="4" height="4" fill="#c8c4c0"/><rect x="340" y="608" width="4" height="4" fill="#b8b0a8"/><rect x="344" y="608" width="4" height="4" fill="#b0a898"/><rect x="348" y="608" width="4" height="4" fill="#a0a8b0"/><rect x="352" y="608" width="4" height="4" fill="#a0a8b0"/><rect x="264" y="612" width="4" height="4" fill="#c8ccd2"/><rect x="268" y="612" width="4" height="4" fill="#c0bcb8"/><rect x="272" y="612" width="4" height="4" fill="#c8ccd2"/><rect x="276" y="612" width="4" height="4" fill="#d4ccc0"/><rect x="280" y="612" width="4" height="4" fill="#c0bcb8"/><rect x="284" y="612" width="4" height="4" fill="#e6e4e2"/><rect x="292" y="612" width="4" height="4" fill="#c8ccd2"/><rect x="296" y="612" width="4" height="4" fill="#c0bcb8"/><rect x="300" y="612" width="4" height="4" fill="#d4ccc0"/><rect x="304" y="612" width="4" height="4" fill="#c0bcb8"/><rect x="308" y="612" width="4" height="4" fill="#e6e4e2"/><rect x="316" y="612" width="4" height="4" fill="#c0bcb8"/><rect x="320" y="612" width="4" height="4" fill="#c8ccd2"/><rect x="324" y="612" width="4" height="4" fill="#e0e0dc"/><rect x="328" y="612" width="4" height="4" fill="#c0bcb8"/><rect x="332" y="612" width="4" height="4" fill="#d4ccc0"/><rect x="336" y="612" width="4" height="4" fill="#e6e4e2"/><rect x="340" y="612" width="4" height="4" fill="#c8ccd2"/><rect x="344" y="612" width="4" height="4" fill="#c0bcb8"/><rect x="348" y="612" width="4" height="4" fill="#c8ccd2"/><rect x="352" y="612" width="4" height="4" fill="#e6e4e2"/><rect x="159" y="621" width="60" height="6" fill="#f5f5f5"/><rect x="164" y="631" width="4" height="4" fill="#dcdcfb"/><rect x="168" y="631" width="4" height="4" fill="#e8e8fd"/><rect x="172" y="631" width="4" height="4" fill="#a8a8f4"/><rect x="176" y="631" width="4" height="4" fill="#e8e8fd"/><rect x="180" y="631" width="4" height="4" fill="#c8c8f8"/><rect x="184" y="631" width="4" height="4" fill="#b4b4f6"/><rect x="196" y="631" width="4" height="4" fill="#c8c8f8"/><rect x="204" y="631" width="4" height="4" fill="#c8c8f8"/><rect x="164" y="635" width="4" height="4" fill="#a0a0f4"/><rect x="168" y="635" width="4" height="4" fill="#c0c0f8"/><rect x="172" y="635" width="4" height="4" fill="#8080f0"/><rect x="176" y="635" width="4" height="4" fill="#d8d8fa"/><rect x="180" y="635" width="4" height="4" fill="#d8d8fa"/><rect x="184" y="635" width="4" height="4" fill="#a0a0f4"/><rect x="188" y="635" width="4" height="4" fill="#8080f0"/><rect x="192" y="635" width="4" height="4" fill="#6868ee"/><rect x="196" y="635" width="4" height="4" fill="#c0c0f8"/><rect x="200" y="635" width="4" height="4" fill="#d8d8fa"/><rect x="204" y="635" width="4" height="4" fill="#9090f2"/><rect x="164" y="639" width="4" height="4" fill="#6868ee"/><rect x="168" y="639" width="4" height="4" fill="#d8d8fa"/><rect x="172" y="639" width="4" height="4" fill="#6868ee"/><rect x="176" y="639" width="4" height="4" fill="#9090f2"/><rect x="184" y="639" width="4" height="4" fill="#9090f2"/><rect x="188" y="639" width="4" height="4" fill="#d8d8fa"/><rect x="192" y="639" width="4" height="4" fill="#b0b0f6"/><rect x="196" y="639" width="4" height="4" fill="#b0b0f6"/><rect x="200" y="639" width="4" height="4" fill="#9090f2"/><rect x="204" y="639" width="4" height="4" fill="#b0b0f6"/><rect x="164" y="643" width="4" height="4" fill="#c8c8f8"/><rect x="168" y="643" width="4" height="4" fill="#b4b4f6"/><rect x="172" y="643" width="4" height="4" fill="#dcdcfb"/><rect x="176" y="643" width="4" height="4" fill="#dcdcfb"/><rect x="180" y="643" width="4" height="4" fill="#a8a8f4"/><rect x="184" y="643" width="4" height="4" fill="#dcdcfb"/><rect x="188" y="643" width="4" height="4" fill="#c8c8f8"/><rect x="192" y="643" width="4" height="4" fill="#a8a8f4"/><rect x="196" y="643" width="4" height="4" fill="#b4b4f6"/><rect x="200" y="643" width="4" height="4" fill="#dcdcfb"/><rect x="259" y="621" width="102" height="6" fill="#f5f5f5"/><rect x="264" y="631" width="4" height="4" fill="#e0e0dc"/><rect x="268" y="631" width="4" height="4" fill="#c0bcb8"/><rect x="272" y="631" width="4" height="4" fill="#e0e0dc"/><rect x="276" y="631" width="4" height="4" fill="#e6e4e2"/><rect x="280" y="631" width="4" height="4" fill="#e6e4e2"/><rect x="284" y="631" width="4" height="4" fill="#d4ccc0"/><rect x="288" y="631" width="4" height="4" fill="#d4ccc0"/><rect x="292" y="631" width="4" height="4" fill="#d8d4d0"/><rect x="296" y="631" width="4" height="4" fill="#d8d4d0"/><rect x="300" y="631" width="4" height="4" fill="#e6e4e2"/><rect x="304" y="631" width="4" height="4" fill="#c8ccd2"/><rect x="308" y="631" width="4" height="4" fill="#d8d4d0"/><rect x="312" y="631" width="4" height="4" fill="#d4ccc0"/><rect x="320" y="631" width="4" height="4" fill="#d4ccc0"/><rect x="324" y="631" width="4" height="4" fill="#c8ccd2"/><rect x="328" y="631" width="4" height="4" fill="#e0e0dc"/><rect x="332" y="631" width="4" height="4" fill="#d8d4d0"/><rect x="336" y="631" width="4" height="4" fill="#d4ccc0"/><rect x="340" y="631" width="4" height="4" fill="#c0bcb8"/><rect x="344" y="631" width="4" height="4" fill="#c0bcb8"/><rect x="348" y="631" width="4" height="4" fill="#d8d4d0"/><rect x="352" y="631" width="4" height="4" fill="#d4ccc0"/><rect x="264" y="635" width="4" height="4" fill="#bfbab4"/><rect x="268" y="635" width="4" height="4" fill="#b0a898"/><rect x="272" y="635" width="4" height="4" fill="#a0a8b0"/><rect x="276" y="635" width="4" height="4" fill="#a0a8b0"/><rect x="280" y="635" width="4" height="4" fill="#b8b0a8"/><rect x="284" y="635" width="4" height="4" fill="#a8a098"/><rect x="288" y="635" width="4" height="4" fill="#d0ccc8"/><rect x="292" y="635" width="4" height="4" fill="#a0a8b0"/><rect x="296" y="635" width="4" height="4" fill="#bfbab4"/><rect x="300" y="635" width="4" height="4" fill="#9898a0"/><rect x="304" y="635" width="4" height="4" fill="#a0a8b0"/><rect x="308" y="635" width="4" height="4" fill="#b0a898"/><rect x="312" y="635" width="4" height="4" fill="#b0a898"/><rect x="316" y="635" width="4" height="4" fill="#b0a898"/><rect x="320" y="635" width="4" height="4" fill="#b0a898"/><rect x="324" y="635" width="4" height="4" fill="#a0a8b0"/><rect x="328" y="635" width="4" height="4" fill="#a8a098"/><rect x="332" y="635" width="4" height="4" fill="#d0ccc8"/><rect x="336" y="635" width="4" height="4" fill="#c8c4c0"/><rect x="340" y="635" width="4" height="4" fill="#909090"/><rect x="344" y="635" width="4" height="4" fill="#a0a8b0"/><rect x="348" y="635" width="4" height="4" fill="#b8b0a8"/><rect x="352" y="635" width="4" height="4" fill="#c8c4c0"/><rect x="264" y="639" width="4" height="4" fill="#909090"/><rect x="268" y="639" width="4" height="4" fill="#d0ccc8"/><rect x="272" y="639" width="4" height="4" fill="#a8a098"/><rect x="276" y="639" width="4" height="4" fill="#909090"/><rect x="280" y="639" width="4" height="4" fill="#b0a898"/><rect x="284" y="639" width="4" height="4" fill="#808088"/><rect x="288" y="639" width="4" height="4" fill="#bfbab4"/><rect x="292" y="639" width="4" height="4" fill="#a0a8b0"/><rect x="296" y="639" width="4" height="4" fill="#a8a098"/><rect x="300" y="639" width="4" height="4" fill="#d0ccc8"/><rect x="304" y="639" width="4" height="4" fill="#b8b0a8"/><rect x="308" y="639" width="4" height="4" fill="#9898a0"/><rect x="312" y="639" width="4" height="4" fill="#9898a0"/><rect x="316" y="639" width="4" height="4" fill="#a8a098"/><rect x="320" y="639" width="4" height="4" fill="#808088"/><rect x="324" y="639" width="4" height="4" fill="#808088"/><rect x="328" y="639" width="4" height="4" fill="#b8b0a8"/><rect x="332" y="639" width="4" height="4" fill="#bfbab4"/><rect x="336" y="639" width="4" height="4" fill="#bfbab4"/><rect x="340" y="639" width="4" height="4" fill="#9898a0"/><rect x="344" y="639" width="4" height="4" fill="#808088"/><rect x="348" y="639" width="4" height="4" fill="#a8a098"/><rect x="352" y="639" width="4" height="4" fill="#b0a898"/><rect x="264" y="643" width="4" height="4" fill="#c8ccd2"/><rect x="268" y="643" width="4" height="4" fill="#d4ccc0"/><rect x="276" y="643" width="4" height="4" fill="#c0bcb8"/><rect x="280" y="643" width="4" height="4" fill="#c8ccd2"/><rect x="284" y="643" width="4" height="4" fill="#c0bcb8"/><rect x="288" y="643" width="4" height="4" fill="#e6e4e2"/><rect x="292" y="643" width="4" height="4" fill="#c0bcb8"/><rect x="296" y="643" width="4" height="4" fill="#d8d4d0"/><rect x="300" y="643" width="4" height="4" fill="#e0e0dc"/><rect x="304" y="643" width="4" height="4" fill="#e0e0dc"/><rect x="312" y="643" width="4" height="4" fill="#e6e4e2"/><rect x="316" y="643" width="4" height="4" fill="#d4ccc0"/><rect x="320" y="643" width="4" height="4" fill="#e6e4e2"/><rect x="324" y="643" width="4" height="4" fill="#e6e4e2"/><rect x="328" y="643" width="4" height="4" fill="#d8d4d0"/><rect x="332" y="643" width="4" height="4" fill="#c8ccd2"/><rect x="336" y="643" width="4" height="4" fill="#e6e4e2"/><rect x="340" y="643" width="4" height="4" fill="#c8ccd2"/><rect x="344" y="643" width="4" height="4" fill="#e6e4e2"/><rect x="348" y="643" width="4" height="4" fill="#e6e4e2"/><rect x="352" y="643" width="4" height="4" fill="#c0bcb8"/><rect x="159" y="652" width="60" height="6" fill="#f5f5f5"/><rect x="164" y="662" width="4" height="4" fill="#e8e8fd"/><rect x="172" y="662" width="4" height="4" fill="#a8a8f4"/><rect x="176" y="662" width="4" height="4" fill="#a8a8f4"/><rect x="180" y="662" width="4" height="4" fill="#e8e8fd"/><rect x="184" y="662" width="4" height="4" fill="#c8c8f8"/><rect x="188" y="662" width="4" height="4" fill="#e8e8fd"/><rect x="192" y="662" width="4" height="4" fill="#a8a8f4"/><rect x="196" y="662" width="4" height="4" fill="#dcdcfb"/><rect x="200" y="662" width="4" height="4" fill="#c8c8f8"/><rect x="204" y="662" width="4" height="4" fill="#e8e8fd"/><rect x="164" y="666" width="4" height="4" fill="#a0a0f4"/><rect x="168" y="666" width="4" height="4" fill="#8080f0"/><rect x="172" y="666" width="4" height="4" fill="#b0b0f6"/><rect x="180" y="666" width="4" height="4" fill="#8080f0"/><rect x="184" y="666" width="4" height="4" fill="#6868ee"/><rect x="192" y="666" width="4" height="4" fill="#9090f2"/><rect x="196" y="666" width="4" height="4" fill="#8080f0"/><rect x="204" y="666" width="4" height="4" fill="#a0a0f4"/><rect x="164" y="670" width="4" height="4" fill="#9090f2"/><rect x="168" y="670" width="4" height="4" fill="#9090f2"/><rect x="172" y="670" width="4" height="4" fill="#8080f0"/><rect x="176" y="670" width="4" height="4" fill="#8080f0"/><rect x="180" y="670" width="4" height="4" fill="#b0b0f6"/><rect x="184" y="670" width="4" height="4" fill="#c0c0f8"/><rect x="188" y="670" width="4" height="4" fill="#8080f0"/><rect x="192" y="670" width="4" height="4" fill="#c0c0f8"/><rect x="196" y="670" width="4" height="4" fill="#b0b0f6"/><rect x="200" y="670" width="4" height="4" fill="#b0b0f6"/><rect x="204" y="670" width="4" height="4" fill="#d8d8fa"/><rect x="164" y="674" width="4" height="4" fill="#b4b4f6"/><rect x="168" y="674" width="4" height="4" fill="#a8a8f4"/><rect x="172" y="674" width="4" height="4" fill="#e8e8fd"/><rect x="176" y="674" width="4" height="4" fill="#c8c8f8"/><rect x="180" y="674" width="4" height="4" fill="#c8c8f8"/><rect x="184" y="674" width="4" height="4" fill="#dcdcfb"/><rect x="188" y="674" width="4" height="4" fill="#b4b4f6"/><rect x="196" y="674" width="4" height="4" fill="#dcdcfb"/><rect x="200" y="674" width="4" height="4" fill="#b4b4f6"/><rect x="204" y="674" width="4" height="4" fill="#b4b4f6"/><rect x="259" y="652" width="102" height="6" fill="#f5f5f5"/><rect x="268" y="662" width="4" height="4" fill="#c8ccd2"/><rect x="276" y="662" width="4" height="4" fill="#d4ccc0"/><rect x="280" y="662" width="4" height="4" fill="#d8d4d0"/><rect x="284" y="662" width="4" height="4" fill="#e0e0dc"/><rect x="288" y="662" width="4" height="4" fill="#c0bcb8"/><rect x="292" y="662" width="4" height="4" fill="#d4ccc0"/><rect x="300" y="662" width="4" height="4" fill="#d4ccc0"/><rect x="304" y="662" width="4" height="4" fill="#e0e0dc"/><rect x="308" y="662" width="4" height="4" fill="#c8ccd2"/><rect x="312" y="662" width="4" height="4" fill="#e6e4e2"/><rect x="316" y="662" width="4" height="4" fill="#e6e4e2"/><rect x="320" y="662" width="4" height="4" fill="#d8d4d0"/><rect x="324" y="662" width="4" height="4" fill="#c8ccd2"/><rect x="328" y="662" width="4" height="4" fill="#c8ccd2"/><rect x="332" y="662" width="4" height="4" fill="#d4ccc0"/><rect x="340" y="662" width="4" height="4" fill="#c8ccd2"/><rect x="344" y="662" width="4" height="4" fill="#c8ccd2"/><rect x="348" y="662" width="4" height="4" fill="#e6e4e2"/><rect x="352" y="662" width="4" height="4" fill="#e0e0dc"/><rect x="264" y="666" width="4" height="4" fill="#9898a0"/><rect x="268" y="666" width="4" height="4" fill="#9898a0"/><rect x="272" y="666" width="4" height="4" fill="#a0a8b0"/><rect x="276" y="666" width="4" height="4" fill="#a0a8b0"/><rect x="280" y="666" width="4" height="4" fill="#808088"/><rect x="284" y="666" width="4" height="4" fill="#9898a0"/><rect x="288" y="666" width="4" height="4" fill="#a8a098"/><rect x="292" y="666" width="4" height="4" fill="#b8b0a8"/><rect x="296" y="666" width="4" height="4" fill="#d0ccc8"/><rect x="300" y="666" width="4" height="4" fill="#b8b0a8"/><rect x="304" y="666" width="4" height="4" fill="#a0a8b0"/><rect x="308" y="666" width="4" height="4" fill="#c8c4c0"/><rect x="312" y="666" width="4" height="4" fill="#9898a0"/><rect x="316" y="666" width="4" height="4" fill="#a0a8b0"/><rect x="320" y="666" width="4" height="4" fill="#b0a898"/><rect x="324" y="666" width="4" height="4" fill="#bfbab4"/><rect x="328" y="666" width="4" height="4" fill="#c8c4c0"/><rect x="332" y="666" width="4" height="4" fill="#bfbab4"/><rect x="336" y="666" width="4" height="4" fill="#b0a898"/><rect x="340" y="666" width="4" height="4" fill="#b0a898"/><rect x="344" y="666" width="4" height="4" fill="#909090"/><rect x="348" y="666" width="4" height="4" fill="#c8c4c0"/><rect x="352" y="666" width="4" height="4" fill="#b0a898"/><rect x="264" y="670" width="4" height="4" fill="#c8c4c0"/><rect x="268" y="670" width="4" height="4" fill="#909090"/><rect x="272" y="670" width="4" height="4" fill="#d0ccc8"/><rect x="276" y="670" width="4" height="4" fill="#a0a8b0"/><rect x="280" y="670" width="4" height="4" fill="#808088"/><rect x="284" y="670" width="4" height="4" fill="#a0a8b0"/><rect x="288" y="670" width="4" height="4" fill="#a0a8b0"/><rect x="292" y="670" width="4" height="4" fill="#bfbab4"/><rect x="296" y="670" width="4" height="4" fill="#b0a898"/><rect x="300" y="670" width="4" height="4" fill="#c8c4c0"/><rect x="304" y="670" width="4" height="4" fill="#b8b0a8"/><rect x="308" y="670" width="4" height="4" fill="#a0a8b0"/><rect x="312" y="670" width="4" height="4" fill="#909090"/><rect x="316" y="670" width="4" height="4" fill="#d0ccc8"/><rect x="320" y="670" width="4" height="4" fill="#b8b0a8"/><rect x="324" y="670" width="4" height="4" fill="#b0a898"/><rect x="328" y="670" width="4" height="4" fill="#a0a8b0"/><rect x="332" y="670" width="4" height="4" fill="#bfbab4"/><rect x="336" y="670" width="4" height="4" fill="#9898a0"/><rect x="340" y="670" width="4" height="4" fill="#c8c4c0"/><rect x="344" y="670" width="4" height="4" fill="#c8c4c0"/><rect x="348" y="670" width="4" height="4" fill="#909090"/><rect x="352" y="670" width="4" height="4" fill="#808088"/><rect x="264" y="674" width="4" height="4" fill="#e0e0dc"/><rect x="268" y="674" width="4" height="4" fill="#e6e4e2"/><rect x="272" y="674" width="4" height="4" fill="#d8d4d0"/><rect x="280" y="674" width="4" height="4" fill="#d8d4d0"/><rect x="284" y="674" width="4" height="4" fill="#e0e0dc"/><rect x="288" y="674" width="4" height="4" fill="#e6e4e2"/><rect x="292" y="674" width="4" height="4" fill="#c8ccd2"/><rect x="296" y="674" width="4" height="4" fill="#d8d4d0"/><rect x="300" y="674" width="4" height="4" fill="#d8d4d0"/><rect x="304" y="674" width="4" height="4" fill="#c8ccd2"/><rect x="308" y="674" width="4" height="4" fill="#d8d4d0"/><rect x="312" y="674" width="4" height="4" fill="#d4ccc0"/><rect x="316" y="674" width="4" height="4" fill="#c8ccd2"/><rect x="320" y="674" width="4" height="4" fill="#d4ccc0"/><rect x="324" y="674" width="4" height="4" fill="#d8d4d0"/><rect x="328" y="674" width="4" height="4" fill="#c8ccd2"/><rect x="332" y="674" width="4" height="4" fill="#e0e0dc"/><rect x="336" y="674" width="4" height="4" fill="#d4ccc0"/><rect x="340" y="674" width="4" height="4" fill="#d8d4d0"/><rect x="348" y="674" width="4" height="4" fill="#c8ccd2"/><rect x="352" y="674" width="4" height="4" fill="#e0e0dc"/></svg>
<svg class="a" style="left:0;top:0" width="1052" height="685">
<g fill="none" stroke-linecap="round" stroke-linejoin="round">
<rect x="712.6" y="169.6" width="111.7" height="47.4" rx="13" stroke="#e8192c" stroke-width="5"/>
<rect x="851" y="160.5" width="154.5" height="60.5" rx="14" stroke="#22b04b" stroke-width="5"/>
<path d="M893.5 133 L962 101.5 C950 125 918 150 904 170 C893 190 890 215 891 249" stroke="#22b04b" stroke-width="5"/>
<rect x="42.5" y="250.5" width="951" height="428" rx="13" stroke="#22b04b" stroke-width="5"/>
</g></svg>
<svg style="position:absolute;left:924px;top:-5px" width="108" height="99" viewBox="0 0 108 99">
<defs>
<linearGradient id="dg924" x1="0" y1="0" x2="0.6" y2="1"><stop offset="0" stop-color="#fbfcfe"/><stop offset="1" stop-color="#e3e9f5"/></linearGradient>
<linearGradient id="bg924" x1="0" y1="0" x2="0" y2="1"><stop offset="0" stop-color="#c2e3f7"/><stop offset="0.35" stop-color="#9fd0f0"/><stop offset="0.42" stop-color="#78b4e2"/><stop offset="1" stop-color="#609fd8"/></linearGradient>
<linearGradient id="gg924" x1="0" y1="0" x2="1" y2="1"><stop offset="0" stop-color="#f7fbf5"/><stop offset="1" stop-color="#dbe9d5"/></linearGradient>
</defs>
<rect x="0" y="0" width="108" height="99" fill="#fcfcfc"/>
<path d="M26.5 9.5 H74 L91.5 26.5 V92.5 H26.5 Z" fill="url(#dg924)" stroke="#cdd0d6" stroke-width="1"/>
<path d="M74 9.5 L76.5 24.5 L91.5 26.5 Z" fill="#fdfdfd" stroke="#b9bcc2" stroke-width="1"/>
<path d="M26.5 92.8 H91.5 M91.8 27 V92.5" stroke="#a7abb2" stroke-width="1.4"/>
<g stroke="#cfd0d8" stroke-width="1" fill="none">
<path d="M34 32.5 H78 M34 40.5 H78 M34 47.7 H78 M34 55.7 H78 M34 62.9 H78 M34 70.4 H78 M34 77.8 H78 M34 85.3 H78"/>
<path d="M34.5 32.5 V85.3 M44.8 32.5 V85.3 M55.7 32.5 V85.3 M66.5 32.5 V85.3 M77.5 32.5 V85.3"/>
</g>
<rect x="51" y="63.6" width="9.7" height="20.6" fill="url(#bg924)" stroke="#6aa3d5" stroke-width="0.7"/>
<rect x="62.2" y="53.2" width="9.7" height="31" fill="url(#bg924)" stroke="#6aa3d5" stroke-width="0.7"/>
<rect x="73" y="59" width="9.7" height="25.2" fill="url(#bg924)" stroke="#6aa3d5" stroke-width="0.7"/>
<path d="M47 85 H86" stroke="#8ab7e0" stroke-width="1.4"/>
<rect x="15.8" y="15.5" width="37.6" height="37" fill="url(#gg924)" stroke="#4b8f43" stroke-width="3.2"/>
<rect x="18" y="17.7" width="33.2" height="32.6" fill="none" stroke="#a9cf9f" stroke-width="0.8"/>
<g fill="#6db462" stroke="#3f8a3a" stroke-width="0.7" stroke-linejoin="round">
<path d="M38.86 23.09 H48.94 L39 33.43 L34.16 27.99 Z"/>
<path d="M20.06 42.56 L28.79 33.5 L37.12 42.56 Z"/>
<path d="M39.94 34.5 H47.6 L44.57 37.86 H42.96 Z"/>
<path d="M20.06 23.09 H29.8 L48.94 44.58 H38.86 Z" fill="#62a957"/>
</g>
</svg>
<svg style="position:absolute;left:636px;top:65px" width="108" height="99" viewBox="0 0 108 99">
<defs>
<linearGradient id="dg636" x1="0" y1="0" x2="0.6" y2="1"><stop offset="0" stop-color="#fbfcfe"/><stop offset="1" stop-color="#e3e9f5"/></linearGradient>
<linearGradient id="bg636" x1="0" y1="0" x2="0" y2="1"><stop offset="0" stop-color="#c2e3f7"/><stop offset="0.35" stop-color="#9fd0f0"/><stop offset="0.42" stop-color="#78b4e2"/><stop offset="1" stop-color="#609fd8"/></linearGradient>
<linearGradient id="gg636" x1="0" y1="0" x2="1" y2="1"><stop offset="0" stop-color="#f7fbf5"/><stop offset="1" stop-color="#dbe9d5"/></linearGradient>
</defs>
<rect x="0" y="0" width="108" height="99" fill="#fcfcfc"/>
<path d="M26.5 9.5 H74 L91.5 26.5 V92.5 H26.5 Z" fill="url(#dg636)" stroke="#cdd0d6" stroke-width="1"/>
<path d="M74 9.5 L76.5 24.5 L91.5 26.5 Z" fill="#fdfdfd" stroke="#b9bcc2" stroke-width="1"/>
<path d="M26.5 92.8 H91.5 M91.8 27 V92.5" stroke="#a7abb2" stroke-width="1.4"/>
<g stroke="#cfd0d8" stroke-width="1" fill="none">
<path d="M34 32.5 H78 M34 40.5 H78 M34 47.7 H78 M34 55.7 H78 M34 62.9 H78 M34 70.4 H78 M34 77.8 H78 M34 85.3 H78"/>
<path d="M34.5 32.5 V85.3 M44.8 32.5 V85.3 M55.7 32.5 V85.3 M66.5 32.5 V85.3 M77.5 32.5 V85.3"/>
</g>
<rect x="51" y="63.6" width="9.7" height="20.6" fill="url(#bg636)" stroke="#6aa3d5" stroke-width="0.7"/>
<rect x="62.2" y="53.2" width="9.7" height="31" fill="url(#bg636)" stroke="#6aa3d5" stroke-width="0.7"/>
<rect x="73" y="59" width="9.7" height="25.2" fill="url(#bg636)" stroke="#6aa3d5" stroke-width="0.7"/>
<path d="M47 85 H86" stroke="#8ab7e0" stroke-width="1.4"/>
<rect x="15.8" y="15.5" width="37.6" height="37" fill="url(#gg636)" stroke="#4b8f43" stroke-width="3.2"/>
<rect x="18" y="17.7" width="33.2" height="32.6" fill="none" stroke="#a9cf9f" stroke-width="0.8"/>
<g fill="#6db462" stroke="#3f8a3a" stroke-width="0.7" stroke-linejoin="round">
<path d="M38.86 23.09 H48.94 L39 33.43 L34.16 27.99 Z"/>
<path d="M20.06 42.56 L28.79 33.5 L37.12 42.56 Z"/>
<path d="M39.94 34.5 H47.6 L44.57 37.86 H42.96 Z"/>
<path d="M20.06 23.09 H29.8 L48.94 44.58 H38.86 Z" fill="#62a957"/>
</g>
</svg>
</body></html>
